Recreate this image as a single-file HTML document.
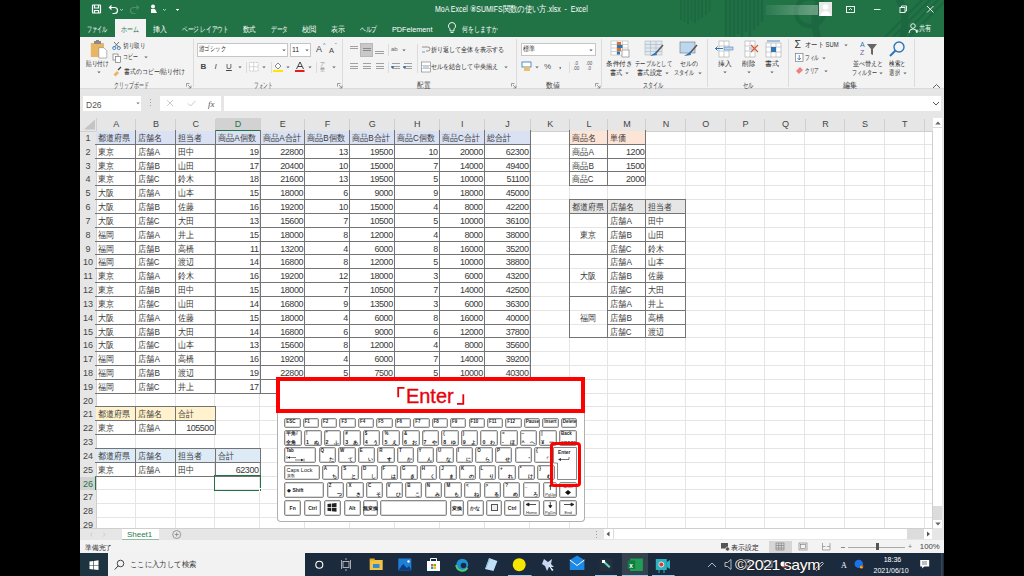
<!DOCTYPE html><html><head><meta charset="utf-8"><style>
*{box-sizing:border-box;margin:0;padding:0}
html,body{width:1024px;height:576px;overflow:hidden;background:#000}
body{position:relative;font-family:"Liberation Sans",sans-serif;color:#333}
.a{position:absolute}
.t{position:absolute;white-space:nowrap;line-height:1}
.cell{position:absolute;white-space:nowrap;overflow:hidden;font-size:9px;line-height:13px;color:#444;padding:0 2px}
.num{text-align:right;letter-spacing:-0.45px;padding-right:2px}
.ch{position:absolute;font-size:9px;color:#444;text-align:center;line-height:13px}
.rh{position:absolute;font-size:9px;color:#444;text-align:center;line-height:13px}
.tab{position:absolute;top:21px;font-size:8px;color:#fff;line-height:12px;white-space:nowrap}
.rl{position:absolute;font-size:7px;color:#2b2b2b;white-space:nowrap;line-height:1}
.gl{position:absolute;font-size:7px;color:#3c3c3c;white-space:nowrap;line-height:1}
.key{position:absolute;background:#fff;border:1px solid #8a8a8a;border-radius:2px;box-shadow:inset 0 0 0 1px #d8d8d8}
.kt{position:absolute;font-size:5.3px;color:#222;line-height:1;white-space:nowrap;font-weight:bold}
</style></head><body>
<div class="a" style="left:80px;top:0;width:864px;height:576px;background:#f3f3f3"></div>
<div class="a" style="left:80px;top:0;width:864px;height:37px;background:#217346;overflow:hidden">
<svg width="864" height="37" style="position:absolute;left:0;top:0"><g stroke="#1c6840" fill="none"><path d="M601 0 V20 M604.5 0 V22 M608 0 V24 M611.5 0 V21 M615 0 V23 M618.5 0 V20 M622 0 V18 M626 0 V15 M629.5 0 V12" stroke-width="1.6"/><path d="M646 0 V37 M650 0 V37 M654 0 V37 M658 0 V34 M662 0 V37 M666 0 V32 M670 0 V37 M674 0 V30 M678 0 V26 M682 0 V22" stroke-width="2.2"/><circle cx="730" cy="12" r="14" stroke-width="4.5"/><circle cx="780" cy="22" r="45" stroke-width="7"/><path d="M805 37 L850 -8 M813 37 L858 -8 M821 37 L866 -8 M829 37 L874 -8" stroke-width="2"/></g></svg>
</div>
<svg class="a" style="left:80px;top:0" width="100" height="19"><g fill="none" stroke="#fff" stroke-width="1.2"><rect x="12.5" y="5" width="8" height="8" rx="0.5"/><path d="M14.5 5 v3 h4 v-3 M14.5 13 v-2.5 h4 v2.5"/><path d="M30 7.5 h4.5 a3 3 0 0 1 0 6 h-2"/><path d="M31.5 5.5 l-2 2 l2 2"/></g><path d="M40 9 l1.5 1.5 l1.5 -1.5" fill="none" stroke="#cfe3d6" stroke-width="0.8"/><g fill="none" stroke="#4f8f69" stroke-width="1.2"><path d="M58 7.5 h-4.5 a3 3 0 0 0 0 6 h2"/><path d="M56.5 5.5 l2 2 l-2 2"/></g><circle cx="73" cy="6.5" r="2" fill="#fff"/><path d="M71 9 h4 l2 4 h-6z" fill="#fff"/><path d="M83 9 l1.5 1.5 l1.5 -1.5" fill="none" stroke="#cfe3d6" stroke-width="0.8"/><path d="M96 9 l1.5 1.5 l1.5 -1.5" fill="#fff" stroke="#fff" stroke-width="0.8"/></svg>
<div class="t" style="left:435px;top:5.49px;font-size:8.5px;color:#fff;--w:153px">MoA Excel ⑧SUMIFS関数の使い方.xlsx&nbsp; -&nbsp; Excel</div>
<div class="a" style="left:766px;top:5px;width:52px;height:10px;background:linear-gradient(90deg,rgba(255,255,255,0.05),rgba(255,255,255,0.35))"></div>
<div class="a" style="left:819px;top:2px;width:13px;height:14px;background:#e8e8e8"></div>
<svg class="a" style="left:819px;top:2px" width="13" height="14"><circle cx="6.5" cy="5" r="2.8" fill="#fff"/><path d="M1.5 14 a5 5 0 0 1 10 0z" fill="#fff"/></svg>
<svg class="a" style="left:840px;top:0" width="104" height="37"><g fill="none" stroke="#fff" stroke-width="0.9"><rect x="6.5" y="6.5" width="8" height="6"/><path d="M9 10 l1.5 -1.5 l1.5 1.5"/><path d="M34 9.5 h6.5"/><rect x="60" y="7.5" width="5" height="5"/><path d="M61.5 7.5 v-1.5 h5 v5 h-1.5"/><path d="M87 6 l6.5 6.5 M93.5 6 l-6.5 6.5"/><circle cx="73" cy="26" r="2.3"/><path d="M69 33 a4 4 0 0 1 8 0 M75.5 31 h3 M77 29.5 v3"/></g></svg>
<div class="t" style="left:918.8px;top:25.02px;font-size:8px;color:#fff;--w:12.3px">共有</div>
<div class="a" style="left:115px;top:19px;width:31px;height:18px;background:#f3f3f3"></div>
<div class="tab" style="left:86.5px;color:#fff;top:24.12px;--w:20.4px">ファイル</div>
<div class="tab" style="left:121px;color:#217346;top:24.12px;--w:18px">ホーム</div>
<div class="tab" style="left:153px;color:#fff;top:24.12px;--w:14px">挿入</div>
<div class="tab" style="left:182px;color:#fff;top:24.12px;--w:46.4px">ページ レイアウト</div>
<div class="tab" style="left:243.4px;color:#fff;top:24.12px;--w:12.9px">数式</div>
<div class="tab" style="left:271.4px;color:#fff;top:24.12px;--w:17.2px">データ</div>
<div class="tab" style="left:301.8px;color:#fff;top:24.12px;--w:14.4px">校閲</div>
<div class="tab" style="left:330.9px;color:#fff;top:24.12px;--w:13.9px">表示</div>
<div class="tab" style="left:359.9px;color:#fff;top:24.12px;--w:17.1px">ヘルプ</div>
<div class="tab" style="left:391.5px;color:#fff;top:23.66px;--w:40px">PDFelement</div>
<div class="tab" style="left:462px;color:#fff;top:24.12px;--w:35.5px">何をしますか</div>
<svg class="a" style="left:446px;top:21px" width="12" height="14"><path d="M6 1.5 a3.5 3.5 0 0 0 -2 6.4 v2 h4 v-2 a3.5 3.5 0 0 0 -2 -6.4z M4.5 11.5 h3" fill="none" stroke="#fff" stroke-width="0.9"/></svg>
<div class="a" style="left:80px;top:37px;width:864px;height:52px;background:#f3f3f3;border-bottom:1px solid #dadada"></div>
<div class="a" style="left:192.5px;top:39px;width:1px;height:48px;background:#dcdcdc"></div>
<div class="a" style="left:342.2px;top:39px;width:1px;height:48px;background:#dcdcdc"></div>
<div class="a" style="left:515.7px;top:39px;width:1px;height:48px;background:#dcdcdc"></div>
<div class="a" style="left:601px;top:39px;width:1px;height:48px;background:#dcdcdc"></div>
<div class="a" style="left:707.4px;top:39px;width:1px;height:48px;background:#dcdcdc"></div>
<div class="a" style="left:788.2px;top:39px;width:1px;height:48px;background:#dcdcdc"></div>
<div class="a" style="left:913.6px;top:39px;width:1px;height:48px;background:#dcdcdc"></div>
<div class="gl" style="left:114px;top:81.85px;font-size:7.5px;--w:34.6px">クリップボード</div>
<div class="gl" style="left:253.6px;top:81.95px;font-size:7.5px;--w:18.3px">フォント</div>
<div class="gl" style="left:417.3px;top:81.75px;font-size:7.5px;--w:13.2px">配置</div>
<div class="gl" style="left:546.2px;top:81.75px;font-size:7.5px;--w:13.8px">数値</div>
<div class="gl" style="left:643px;top:81.75px;font-size:7.5px;--w:20.4px">スタイル</div>
<div class="gl" style="left:742.5px;top:81.75px;font-size:7.5px;--w:10.5px">セル</div>
<div class="gl" style="left:843.3px;top:81.75px;font-size:7.5px;--w:14px">編集</div>
<svg class="a" style="left:186px;top:83px" width="6" height="6"><path d="M0.5 0.5 h3 M0.5 0.5 v3 M2 2 l3 3 M5 2.5 v2.5 h-2.5" fill="none" stroke="#777" stroke-width="0.7"/></svg>
<svg class="a" style="left:337px;top:83px" width="6" height="6"><path d="M0.5 0.5 h3 M0.5 0.5 v3 M2 2 l3 3 M5 2.5 v2.5 h-2.5" fill="none" stroke="#777" stroke-width="0.7"/></svg>
<svg class="a" style="left:510.5px;top:83px" width="6" height="6"><path d="M0.5 0.5 h3 M0.5 0.5 v3 M2 2 l3 3 M5 2.5 v2.5 h-2.5" fill="none" stroke="#777" stroke-width="0.7"/></svg>
<svg class="a" style="left:595px;top:83px" width="6" height="6"><path d="M0.5 0.5 h3 M0.5 0.5 v3 M2 2 l3 3 M5 2.5 v2.5 h-2.5" fill="none" stroke="#777" stroke-width="0.7"/></svg>
<svg class="a" style="left:932px;top:83px" width="9" height="6"><path d="M1 5 l3.5 -3.5 l3.5 3.5" fill="none" stroke="#555" stroke-width="0.9"/></svg>
<svg class="a" style="left:86px;top:40px" width="24" height="20"><rect x="4.8" y="3" width="13.2" height="14.1" fill="#e8b563" rx="0.5"/><rect x="8" y="1" width="7" height="3" fill="#8a8a8a"/><rect x="10" y="0" width="3" height="2" fill="#8a8a8a"/><path d="M12.8 7.7 h5 l3 3 v7.3 h-8z" fill="#fff" stroke="#888" stroke-width="0.6"/></svg>
<div class="rl" style="left:85.9px;top:60.81px;font-size:6.5px;--w:22.8px">貼り付け</div>
<svg class="a" style="left:96.5px;top:71.0px" width="4" height="3"><path d="M0.3 0.5 L2 2.3 L3.7 0.5z" fill="#666"/></svg>
<svg class="a" style="left:112px;top:41px" width="10" height="36"><path d="M2 1 L7 6.5 M7 1 L2 6.5" stroke="#555" stroke-width="0.8"/><circle cx="2.2" cy="7" r="1.6" fill="none" stroke="#2e75b6" stroke-width="0.8"/><circle cx="6.8" cy="7" r="1.6" fill="none" stroke="#2e75b6" stroke-width="0.8"/><rect x="1" y="13" width="5" height="6" fill="#fff" stroke="#777" stroke-width="0.7"/><rect x="3.5" y="15.5" width="5" height="6" fill="#fff" stroke="#777" stroke-width="0.7"/><path d="M1.5 33.5 L5 30 L7 32 L3.5 35.5z" fill="#e8b563"/><path d="M6 29 L9 26" stroke="#444" stroke-width="1.2"/></svg>
<div class="rl" style="left:123.4px;top:42.61px;font-size:6.5px;--w:22.2px">切り取り</div>
<div class="rl" style="left:123.4px;top:53.61px;font-size:6.5px;--w:14.6px">コピー</div>
<svg class="a" style="left:144.2px;top:56.0px" width="4" height="3"><path d="M0.3 0.5 L2 2.3 L3.7 0.5z" fill="#666"/></svg>
<div class="rl" style="left:123.6px;top:69.01px;font-size:6.5px;--w:60.7px">書式のコピー/貼り付け</div>
<div class="a" style="left:197.4px;top:42.7px;width:91px;height:14px;background:#fff;border:1px solid #c6c6c6"></div>
<div class="rl" style="left:198.5px;top:46.41px;font-size:6.5px;--w:27px">游ゴシック</div>
<svg class="a" style="left:282px;top:48.5px" width="4" height="3"><path d="M0.3 0.5 L2 2.3 L3.7 0.5z" fill="#666"/></svg>
<div class="a" style="left:290px;top:42.7px;width:21.3px;height:14px;background:#fff;border:1px solid #c6c6c6"></div>
<div class="rl" style="left:292px;top:46px;font-size:7px">11</div>
<svg class="a" style="left:305px;top:48.5px" width="4" height="3"><path d="M0.3 0.5 L2 2.3 L3.7 0.5z" fill="#666"/></svg>
<div class="rl" style="left:316px;top:45px;font-size:9px;color:#444">A</div><div class="rl" style="left:323px;top:43px;font-size:5px;color:#2e75b6">^</div>
<div class="rl" style="left:329px;top:46.5px;font-size:7.5px;color:#444">A</div><div class="rl" style="left:335px;top:43px;font-size:5px;color:#2e75b6">ˇ</div>
<div class="rl" style="left:200.5px;top:62.5px;font-size:8px;font-weight:bold;color:#444">B</div>
<div class="rl" style="left:214.5px;top:62.5px;font-size:8px;font-style:italic;color:#444">I</div>
<div class="rl" style="left:226px;top:62.5px;font-size:8px;color:#444;text-decoration:underline">U</div>
<svg class="a" style="left:238px;top:65.5px" width="4" height="3"><path d="M0.3 0.5 L2 2.3 L3.7 0.5z" fill="#666"/></svg>
<div class="a" style="left:246.2px;top:62px;width:1px;height:11px;background:#dcdcdc"></div>
<svg class="a" style="left:249px;top:62px" width="10" height="10"><rect x="0.5" y="0.5" width="8.5" height="8.5" fill="#fff" stroke="#aaa" stroke-width="0.6" stroke-dasharray="1 0.6"/><path d="M4.75 0.5 v8.5 M0.5 4.75 h8.5" stroke="#bbb" stroke-width="0.6"/></svg>
<svg class="a" style="left:262.3px;top:65.5px" width="4" height="3"><path d="M0.3 0.5 L2 2.3 L3.7 0.5z" fill="#666"/></svg>
<div class="a" style="left:270.5px;top:62px;width:1px;height:11px;background:#dcdcdc"></div>
<svg class="a" style="left:273px;top:61px" width="10" height="11"><path d="M2 5 L5 2 L8 5 L5 8z" fill="#fff" stroke="#555" stroke-width="0.7"/><rect x="0" y="9" width="10" height="2" fill="#ffe600"/></svg>
<svg class="a" style="left:286px;top:65.5px" width="4" height="3"><path d="M0.3 0.5 L2 2.3 L3.7 0.5z" fill="#666"/></svg>
<svg class="a" style="left:295px;top:61px" width="10" height="11"><path d="M1.5 8 L5 1 L8.5 8 M3 5.5 h4" fill="none" stroke="#444" stroke-width="1"/><rect x="0" y="9" width="9.5" height="2" fill="#e81c1c"/></svg>
<svg class="a" style="left:307.6px;top:65.5px" width="4" height="3"><path d="M0.3 0.5 L2 2.3 L3.7 0.5z" fill="#666"/></svg>
<div class="a" style="left:315.5px;top:62px;width:1px;height:11px;background:#dcdcdc"></div>
<div class="rl" style="left:320px;top:62px;font-size:5px;color:#888">ア<br>亜</div>
<svg class="a" style="left:331.7px;top:65.5px" width="4" height="3"><path d="M0.3 0.5 L2 2.3 L3.7 0.5z" fill="#666"/></svg>
<div class="a" style="left:359.9px;top:43px;width:13px;height:13.7px;background:#c8c8c8;border:1px solid #b8b8b8"></div>
<div class="a" style="left:350px;top:46px;width:8px;height:1px;background:#a0a0a0"></div><div class="a" style="left:350px;top:48px;width:8px;height:1px;background:#a0a0a0"></div>
<div class="a" style="left:362.5px;top:48px;width:8px;height:1px;background:#8a8a8a"></div><div class="a" style="left:362.5px;top:50px;width:8px;height:1px;background:#8a8a8a"></div>
<div class="a" style="left:375px;top:51px;width:9px;height:1px;background:#a0a0a0"></div><div class="a" style="left:375px;top:53px;width:9px;height:1px;background:#a0a0a0"></div>
<div class="a" style="left:349.7px;top:63.0px;width:8px;height:1px;background:#a0a0a0"></div><div class="a" style="left:349.7px;top:65.5px;width:8px;height:1px;background:#a0a0a0"></div><div class="a" style="left:349.7px;top:68.0px;width:8px;height:1px;background:#a0a0a0"></div>
<div class="a" style="left:362.5px;top:63.0px;width:8px;height:1px;background:#a0a0a0"></div><div class="a" style="left:362.5px;top:65.5px;width:8px;height:1px;background:#a0a0a0"></div><div class="a" style="left:362.5px;top:68.0px;width:8px;height:1px;background:#a0a0a0"></div>
<div class="a" style="left:375.5px;top:63.0px;width:8px;height:1px;background:#a0a0a0"></div><div class="a" style="left:375.5px;top:65.5px;width:8px;height:1px;background:#a0a0a0"></div><div class="a" style="left:375.5px;top:68.0px;width:8px;height:1px;background:#a0a0a0"></div>
<div class="a" style="left:392px;top:63.0px;width:8px;height:1px;background:#a0a0a0"></div><div class="a" style="left:392px;top:65.5px;width:8px;height:1px;background:#a0a0a0"></div><div class="a" style="left:392px;top:68.0px;width:8px;height:1px;background:#a0a0a0"></div>
<div class="a" style="left:404px;top:63.0px;width:8px;height:1px;background:#a0a0a0"></div><div class="a" style="left:404px;top:65.5px;width:8px;height:1px;background:#a0a0a0"></div><div class="a" style="left:404px;top:68.0px;width:8px;height:1px;background:#a0a0a0"></div>
<div class="a" style="left:391px;top:65.5px;width:2.5px;height:2.5px;background:#2e75b6;border-radius:50%"></div>
<div class="a" style="left:403px;top:65.5px;width:2.5px;height:2.5px;background:#2e75b6;border-radius:50%"></div>
<div class="a" style="left:387.5px;top:44px;width:1px;height:12px;background:#dcdcdc"></div>
<div class="a" style="left:387.5px;top:62px;width:1px;height:11px;background:#dcdcdc"></div>
<div class="rl" style="left:391px;top:46px;font-size:6px;color:#666">ab</div>
<svg class="a" style="left:402px;top:48.5px" width="4" height="3"><path d="M0.3 0.5 L2 2.3 L3.7 0.5z" fill="#666"/></svg>
<div class="a" style="left:416.5px;top:44px;width:1px;height:29px;background:#dcdcdc"></div>
<svg class="a" style="left:421px;top:45px" width="10" height="28"><path d="M1 2 h6 a2 2 0 0 1 0 4 h-2" fill="none" stroke="#666" stroke-width="0.7"/><path d="M1 7 h3" stroke="#2e75b6" stroke-width="0.7"/><rect x="0.5" y="17" width="9" height="10" fill="#fff" stroke="#777" stroke-width="0.6"/><path d="M0.5 20.5 h9 M0.5 23.5 h9" stroke="#999" stroke-width="0.5"/><path d="M2 22 h6" stroke="#2e75b6" stroke-width="0.6"/></svg>
<div class="rl" style="left:431.4px;top:46.50px;font-size:6.6px;--w:72.9px">折り返して全体を表示する</div>
<div class="rl" style="left:431.4px;top:63.70px;font-size:6.6px;--w:66.8px">セルを結合して中央揃え</div>
<svg class="a" style="left:504px;top:65.5px" width="4" height="3"><path d="M0.3 0.5 L2 2.3 L3.7 0.5z" fill="#666"/></svg>
<div class="a" style="left:520.5px;top:42.8px;width:75px;height:13.7px;background:#fff;border:1px solid #c6c6c6"></div>
<div class="rl" style="left:522.5px;top:46.41px;font-size:6.5px;--w:12px">標準</div>
<svg class="a" style="left:589px;top:48.5px" width="4" height="3"><path d="M0.3 0.5 L2 2.3 L3.7 0.5z" fill="#666"/></svg>
<svg class="a" style="left:521px;top:61px" width="12" height="11"><rect x="1" y="1" width="9" height="5" fill="#fff" stroke="#2e75b6" stroke-width="0.8"/><rect x="3" y="6" width="6" height="4" fill="#e8c070"/></svg>
<svg class="a" style="left:535px;top:65.5px" width="4" height="3"><path d="M0.3 0.5 L2 2.3 L3.7 0.5z" fill="#666"/></svg>
<div class="rl" style="left:544px;top:62.5px;font-size:8px;color:#555">%</div>
<div class="rl" style="left:559px;top:61.5px;font-size:8px;color:#444;font-weight:bold">,</div>
<div class="a" style="left:568.5px;top:62px;width:1px;height:11px;background:#dcdcdc"></div>
<div class="rl" style="left:573px;top:62px;font-size:4.5px;color:#555;line-height:4.5px">&nbsp;.0<br>.00</div>
<div class="rl" style="left:586px;top:62px;font-size:4.5px;color:#555;line-height:4.5px">.00<br>&nbsp;.0</div>
<svg class="a" style="left:610px;top:40px" width="90" height="18"><g stroke="#aaa" stroke-width="0.5" fill="#fff"><rect x="1" y="1" width="17" height="14"/><path d="M1 4.5 h17 M1 8 h17 M1 11.5 h17 M7 1 v14 M12.5 1 v14"/></g><rect x="7" y="2" width="4" height="3" fill="#e07030"/><rect x="7" y="5" width="5.5" height="3" fill="#2e75b6"/><rect x="7" y="8" width="4" height="3" fill="#e07030"/><rect x="7" y="11.5" width="3" height="3" fill="#2e75b6"/><rect x="12" y="10" width="7" height="7" fill="#fff" stroke="#777" stroke-width="0.6"/><g stroke="#aaa" stroke-width="0.5" fill="#dde8f5"><rect x="35" y="1" width="17" height="14"/><path d="M35 4.5 h17 M35 8 h17 M35 11.5 h17 M40.5 1 v14 M46 1 v14"/></g><path d="M46 13 L53 5" stroke="#555" stroke-width="1.5"/><path d="M40 16 L46 12 L47 15z" fill="#2e75b6"/><rect x="70" y="2" width="15" height="11" fill="#bdd7ee" stroke="#777" stroke-width="0.6"/><path d="M80 13 L87 5" stroke="#555" stroke-width="1.5"/><path d="M74 16 L80 12 L81 15z" fill="#2e75b6"/></svg>
<div class="rl" style="left:605.8px;top:61.00px;font-size:6.6px;--w:26.4px">条件付き</div>
<div class="rl" style="left:609.5px;top:69.80px;font-size:6.6px;--w:12.5px">書式</div>
<svg class="a" style="left:625px;top:71.5px" width="4" height="3"><path d="M0.3 0.5 L2 2.3 L3.7 0.5z" fill="#666"/></svg>
<div class="rl" style="left:634.5px;top:61.00px;font-size:6.6px;--w:36.75px">テーブルとして</div>
<div class="rl" style="left:637px;top:69.80px;font-size:6.6px;--w:25px">書式設定</div>
<svg class="a" style="left:665px;top:71.5px" width="4" height="3"><path d="M0.3 0.5 L2 2.3 L3.7 0.5z" fill="#666"/></svg>
<div class="rl" style="left:680px;top:61.00px;font-size:6.6px;--w:18px">セルの</div>
<div class="rl" style="left:674.2px;top:69.80px;font-size:6.6px;--w:20.5px">スタイル</div>
<svg class="a" style="left:698px;top:71.5px" width="4" height="3"><path d="M0.3 0.5 L2 2.3 L3.7 0.5z" fill="#666"/></svg>
<svg class="a" style="left:714px;top:40px" width="70" height="19"><g stroke="#999" stroke-width="0.5" fill="#fff"><rect x="5" y="1" width="10" height="16"/><path d="M5 6 h10 M5 11 h10 M10 1 v5 M10 11 v6"/><rect x="31" y="1" width="10" height="16"/><path d="M31 6 h10 M31 11 h10 M36 1 v5 M36 11 v6"/><rect x="52" y="3" width="15" height="14"/><path d="M52 7 h15 M52 12 h15 M57 3 v14 M62 3 v14"/></g><path d="M1 8.5 h8" stroke="#2e75b6" stroke-width="1"/><path d="M3.5 6.5 L1.5 8.5 L3.5 10.5" fill="none" stroke="#2e75b6" stroke-width="1"/><rect x="10" y="7" width="9" height="3" fill="#bdd7ee" stroke="#2e75b6" stroke-width="0.5"/><rect x="35" y="7" width="6" height="3" fill="#bdd7ee"/><path d="M37 5 L44 12 M44 5 L37 12" stroke="#e05a2b" stroke-width="1.1"/><rect x="57" y="7" width="5" height="5" fill="#2e75b6"/><path d="M53 1 h13" stroke="#2e75b6" stroke-width="0.8"/></svg>
<div class="rl" style="left:717.9px;top:60.90px;font-size:6.6px;--w:13.3px">挿入</div>
<svg class="a" style="left:722.5px;top:71.0px" width="4" height="3"><path d="M0.3 0.5 L2 2.3 L3.7 0.5z" fill="#666"/></svg>
<div class="rl" style="left:742px;top:60.90px;font-size:6.6px;--w:13px">削除</div>
<svg class="a" style="left:746.5px;top:71.0px" width="4" height="3"><path d="M0.3 0.5 L2 2.3 L3.7 0.5z" fill="#666"/></svg>
<div class="rl" style="left:765px;top:60.90px;font-size:6.6px;--w:14px">書式</div>
<svg class="a" style="left:770px;top:71.0px" width="4" height="3"><path d="M0.3 0.5 L2 2.3 L3.7 0.5z" fill="#666"/></svg>
<div class="rl" style="left:794.5px;top:39.3px;font-size:10.5px;color:#333">Σ</div>
<div class="rl" style="left:805.3px;top:42.11px;font-size:6.5px;--w:33.3px">オート SUM</div>
<svg class="a" style="left:843.6px;top:43.5px" width="4" height="3"><path d="M0.3 0.5 L2 2.3 L3.7 0.5z" fill="#666"/></svg>
<svg class="a" style="left:795px;top:53px" width="9" height="22"><rect x="0.5" y="0.5" width="7.5" height="8" fill="#fff" stroke="#666" stroke-width="0.6"/><path d="M4.25 2 v5 M2.5 5 l1.75 2 l1.75 -2" fill="none" stroke="#2e75b6" stroke-width="0.8"/><path d="M1 18 L5 14 L8 17 L4 21z" fill="#f08080"/></svg>
<div class="rl" style="left:805.3px;top:54.71px;font-size:6.5px;--w:14px">フィル</div>
<svg class="a" style="left:822px;top:57.0px" width="4" height="3"><path d="M0.3 0.5 L2 2.3 L3.7 0.5z" fill="#666"/></svg>
<div class="rl" style="left:805.3px;top:67.51px;font-size:6.5px;--w:14px">クリア</div>
<svg class="a" style="left:824px;top:69.5px" width="4" height="3"><path d="M0.3 0.5 L2 2.3 L3.7 0.5z" fill="#666"/></svg>
<svg class="a" style="left:859px;top:40px" width="48" height="18"><text x="1" y="7" font-size="7" fill="#2e75b6" font-family="Liberation Sans">A</text><text x="1" y="15" font-size="7" fill="#7a5aa6" font-family="Liberation Sans">Z</text><path d="M8 4 h10 l-4 5 v6 l-2 -1 v-5z" fill="#666"/><circle cx="40" cy="7" r="5" fill="none" stroke="#2e75b6" stroke-width="1.4"/><path d="M36.5 10.5 L31 16" stroke="#2e75b6" stroke-width="2"/></svg>
<div class="rl" style="left:853px;top:60.60px;font-size:6.6px;--w:30px">並べ替えと</div>
<div class="rl" style="left:852px;top:69.60px;font-size:6.6px;--w:25px">フィルター</div>
<svg class="a" style="left:879px;top:71.5px" width="4" height="3"><path d="M0.3 0.5 L2 2.3 L3.7 0.5z" fill="#666"/></svg>
<div class="rl" style="left:889px;top:60.60px;font-size:6.6px;--w:16.5px">検索と</div>
<div class="rl" style="left:889px;top:69.60px;font-size:6.6px;--w:11px">選択</div>
<svg class="a" style="left:903px;top:71.5px" width="4" height="3"><path d="M0.3 0.5 L2 2.3 L3.7 0.5z" fill="#666"/></svg>
<div class="a" style="left:80px;top:89px;width:864px;height:29px;background:#e6e6e6"></div>
<div class="a" style="left:83.1px;top:96.2px;width:58px;height:14.8px;background:#fff"></div>
<div class="t" style="left:86px;top:100.5px;font-size:8.5px;color:#555">D26</div>
<svg class="a" style="left:135.5px;top:102.0px" width="4" height="3"><path d="M0.3 0.5 L2 2.3 L3.7 0.5z" fill="#777"/></svg>
<svg class="a" style="left:149px;top:98px" width="3" height="10"><circle cx="1.5" cy="1.5" r="0.6" fill="#999"/><circle cx="1.5" cy="4.5" r="0.6" fill="#999"/><circle cx="1.5" cy="7.5" r="0.6" fill="#999"/></svg>
<div class="a" style="left:160px;top:96.2px;width:61.4px;height:14.8px;background:#fff"></div>
<svg class="a" style="left:160px;top:96px" width="62" height="15"><path d="M7 4 l6 6 M13 4 l-6 6" stroke="#c0c0c0" stroke-width="0.8"/><path d="M28 7.5 l2.5 2.5 l5 -5" fill="none" stroke="#c0c0c0" stroke-width="0.9"/><text x="48" y="11" font-size="9" font-style="italic" font-family="Liberation Serif" fill="#555">fx</text></svg>
<div class="a" style="left:223.8px;top:96.2px;width:717px;height:14.8px;background:#fff"></div>
<svg class="a" style="left:932px;top:101px" width="8" height="5"><path d="M1 1 l3 3 l3 -3" fill="none" stroke="#555" stroke-width="1"/></svg>
<div class="a" style="left:80px;top:118px;width:852.2px;height:13px;background:#e6e6e6"></div>
<div class="a" style="left:80px;top:131px;width:16.4px;height:397.5px;background:#e6e6e6"></div>
<div class="a" style="left:96.4px;top:131px;width:835.8000000000001px;height:397.5px;background:#fff;overflow:hidden">
<div class="a" style="left:38.70px;top:0;width:1px;height:400px;background:#e5e5e5"></div><div class="a" style="left:78.40px;top:0;width:1px;height:400px;background:#e5e5e5"></div><div class="a" style="left:118.10px;top:0;width:1px;height:400px;background:#e5e5e5"></div><div class="a" style="left:163.10px;top:0;width:1px;height:400px;background:#e5e5e5"></div><div class="a" style="left:207.60px;top:0;width:1px;height:400px;background:#e5e5e5"></div><div class="a" style="left:252.40px;top:0;width:1px;height:400px;background:#e5e5e5"></div><div class="a" style="left:297.30px;top:0;width:1px;height:400px;background:#e5e5e5"></div><div class="a" style="left:342.30px;top:0;width:1px;height:400px;background:#e5e5e5"></div><div class="a" style="left:387.30px;top:0;width:1px;height:400px;background:#e5e5e5"></div><div class="a" style="left:433.10px;top:0;width:1px;height:400px;background:#e5e5e5"></div><div class="a" style="left:472.60px;top:0;width:1px;height:400px;background:#e5e5e5"></div><div class="a" style="left:510.40px;top:0;width:1px;height:400px;background:#e5e5e5"></div><div class="a" style="left:548.90px;top:0;width:1px;height:400px;background:#e5e5e5"></div><div class="a" style="left:588.40px;top:0;width:1px;height:400px;background:#e5e5e5"></div><div class="a" style="left:628.20px;top:0;width:1px;height:400px;background:#e5e5e5"></div><div class="a" style="left:668.00px;top:0;width:1px;height:400px;background:#e5e5e5"></div><div class="a" style="left:708.10px;top:0;width:1px;height:400px;background:#e5e5e5"></div><div class="a" style="left:747.90px;top:0;width:1px;height:400px;background:#e5e5e5"></div><div class="a" style="left:787.40px;top:0;width:1px;height:400px;background:#e5e5e5"></div><div class="a" style="left:827.20px;top:0;width:1px;height:400px;background:#e5e5e5"></div><div class="a" style="left:866.60px;top:0;width:1px;height:400px;background:#e5e5e5"></div><div class="a" style="left:0;top:12.85px;width:900px;height:1px;background:#e5e5e5"></div><div class="a" style="left:0;top:26.67px;width:900px;height:1px;background:#e5e5e5"></div><div class="a" style="left:0;top:40.49px;width:900px;height:1px;background:#e5e5e5"></div><div class="a" style="left:0;top:54.31px;width:900px;height:1px;background:#e5e5e5"></div><div class="a" style="left:0;top:68.13px;width:900px;height:1px;background:#e5e5e5"></div><div class="a" style="left:0;top:81.95px;width:900px;height:1px;background:#e5e5e5"></div><div class="a" style="left:0;top:95.77px;width:900px;height:1px;background:#e5e5e5"></div><div class="a" style="left:0;top:109.59px;width:900px;height:1px;background:#e5e5e5"></div><div class="a" style="left:0;top:123.41px;width:900px;height:1px;background:#e5e5e5"></div><div class="a" style="left:0;top:137.23px;width:900px;height:1px;background:#e5e5e5"></div><div class="a" style="left:0;top:151.05px;width:900px;height:1px;background:#e5e5e5"></div><div class="a" style="left:0;top:164.87px;width:900px;height:1px;background:#e5e5e5"></div><div class="a" style="left:0;top:178.69px;width:900px;height:1px;background:#e5e5e5"></div><div class="a" style="left:0;top:192.51px;width:900px;height:1px;background:#e5e5e5"></div><div class="a" style="left:0;top:206.33px;width:900px;height:1px;background:#e5e5e5"></div><div class="a" style="left:0;top:220.15px;width:900px;height:1px;background:#e5e5e5"></div><div class="a" style="left:0;top:233.97px;width:900px;height:1px;background:#e5e5e5"></div><div class="a" style="left:0;top:247.79px;width:900px;height:1px;background:#e5e5e5"></div><div class="a" style="left:0;top:261.61px;width:900px;height:1px;background:#e5e5e5"></div><div class="a" style="left:0;top:275.43px;width:900px;height:1px;background:#e5e5e5"></div><div class="a" style="left:0;top:289.25px;width:900px;height:1px;background:#e5e5e5"></div><div class="a" style="left:0;top:303.07px;width:900px;height:1px;background:#e5e5e5"></div><div class="a" style="left:0;top:316.89px;width:900px;height:1px;background:#e5e5e5"></div><div class="a" style="left:0;top:330.71px;width:900px;height:1px;background:#e5e5e5"></div><div class="a" style="left:0;top:344.53px;width:900px;height:1px;background:#e5e5e5"></div><div class="a" style="left:0;top:358.35px;width:900px;height:1px;background:#e5e5e5"></div><div class="a" style="left:0;top:372.17px;width:900px;height:1px;background:#e5e5e5"></div><div class="a" style="left:0;top:385.99px;width:900px;height:1px;background:#e5e5e5"></div><div class="a" style="left:0;top:399.81px;width:900px;height:1px;background:#e5e5e5"></div>
</div>
<svg class="a" style="left:80px;top:118px" width="17" height="13"><path d="M15 1.5 V11.5 H4z" fill="#c4c4c4"/></svg>
<div class="ch" style="left:96.40px;top:118px;width:39.70px;height:13px;background:transparent;color:#444">A</div>
<div class="a" style="left:135.10px;top:119px;width:1px;height:12px;background:#cfcfcf"></div>
<div class="ch" style="left:136.10px;top:118px;width:39.70px;height:13px;background:transparent;color:#444">B</div>
<div class="a" style="left:174.80px;top:119px;width:1px;height:12px;background:#cfcfcf"></div>
<div class="ch" style="left:175.80px;top:118px;width:39.70px;height:13px;background:transparent;color:#444">C</div>
<div class="a" style="left:214.50px;top:119px;width:1px;height:12px;background:#cfcfcf"></div>
<div class="ch" style="left:215.50px;top:118px;width:45.00px;height:13px;background:#d2d2d2;color:#217346">D</div>
<div class="a" style="left:259.50px;top:119px;width:1px;height:12px;background:#cfcfcf"></div>
<div class="ch" style="left:260.50px;top:118px;width:44.50px;height:13px;background:transparent;color:#444">E</div>
<div class="a" style="left:304.00px;top:119px;width:1px;height:12px;background:#cfcfcf"></div>
<div class="ch" style="left:305.00px;top:118px;width:44.80px;height:13px;background:transparent;color:#444">F</div>
<div class="a" style="left:348.80px;top:119px;width:1px;height:12px;background:#cfcfcf"></div>
<div class="ch" style="left:349.80px;top:118px;width:44.90px;height:13px;background:transparent;color:#444">G</div>
<div class="a" style="left:393.70px;top:119px;width:1px;height:12px;background:#cfcfcf"></div>
<div class="ch" style="left:394.70px;top:118px;width:45.00px;height:13px;background:transparent;color:#444">H</div>
<div class="a" style="left:438.70px;top:119px;width:1px;height:12px;background:#cfcfcf"></div>
<div class="ch" style="left:439.70px;top:118px;width:45.00px;height:13px;background:transparent;color:#444">I</div>
<div class="a" style="left:483.70px;top:119px;width:1px;height:12px;background:#cfcfcf"></div>
<div class="ch" style="left:484.70px;top:118px;width:45.80px;height:13px;background:transparent;color:#444">J</div>
<div class="a" style="left:529.50px;top:119px;width:1px;height:12px;background:#cfcfcf"></div>
<div class="ch" style="left:530.50px;top:118px;width:39.50px;height:13px;background:transparent;color:#444">K</div>
<div class="a" style="left:569.00px;top:119px;width:1px;height:12px;background:#cfcfcf"></div>
<div class="ch" style="left:570.00px;top:118px;width:37.80px;height:13px;background:transparent;color:#444">L</div>
<div class="a" style="left:606.80px;top:119px;width:1px;height:12px;background:#cfcfcf"></div>
<div class="ch" style="left:607.80px;top:118px;width:38.50px;height:13px;background:transparent;color:#444">M</div>
<div class="a" style="left:645.30px;top:119px;width:1px;height:12px;background:#cfcfcf"></div>
<div class="ch" style="left:646.30px;top:118px;width:39.50px;height:13px;background:transparent;color:#444">N</div>
<div class="a" style="left:684.80px;top:119px;width:1px;height:12px;background:#cfcfcf"></div>
<div class="ch" style="left:685.80px;top:118px;width:39.80px;height:13px;background:transparent;color:#444">O</div>
<div class="a" style="left:724.60px;top:119px;width:1px;height:12px;background:#cfcfcf"></div>
<div class="ch" style="left:725.60px;top:118px;width:39.80px;height:13px;background:transparent;color:#444">P</div>
<div class="a" style="left:764.40px;top:119px;width:1px;height:12px;background:#cfcfcf"></div>
<div class="ch" style="left:765.40px;top:118px;width:40.10px;height:13px;background:transparent;color:#444">Q</div>
<div class="a" style="left:804.50px;top:119px;width:1px;height:12px;background:#cfcfcf"></div>
<div class="ch" style="left:805.50px;top:118px;width:39.80px;height:13px;background:transparent;color:#444">R</div>
<div class="a" style="left:844.30px;top:119px;width:1px;height:12px;background:#cfcfcf"></div>
<div class="ch" style="left:845.30px;top:118px;width:39.50px;height:13px;background:transparent;color:#444">S</div>
<div class="a" style="left:883.80px;top:119px;width:1px;height:12px;background:#cfcfcf"></div>
<div class="ch" style="left:884.80px;top:118px;width:39.80px;height:13px;background:transparent;color:#444">T</div>
<div class="a" style="left:923.60px;top:119px;width:1px;height:12px;background:#cfcfcf"></div>
<div class="ch" style="left:924.60px;top:118px;width:7.60px;height:13px;background:transparent;color:#444"></div>
<div class="a" style="left:932.20px;top:119px;width:1px;height:12px;background:#cfcfcf"></div>
<div class="a" style="left:215.50px;top:129.5px;width:45.00px;height:1.5px;background:#217346"></div>
<div class="a" style="left:80px;top:130.5px;width:852px;height:1px;background:#cfcfcf"></div>
<div class="a" style="left:95.9px;top:118px;width:1px;height:411px;background:#cfcfcf"></div>
<div class="rh" style="left:80px;top:131.03px;width:16px;height:13.82px;background:transparent;color:#444;line-height:14px">1</div>
<div class="rh" style="left:80px;top:144.85px;width:16px;height:13.82px;background:transparent;color:#444;line-height:14px">2</div>
<div class="rh" style="left:80px;top:158.67px;width:16px;height:13.82px;background:transparent;color:#444;line-height:14px">3</div>
<div class="rh" style="left:80px;top:172.49px;width:16px;height:13.82px;background:transparent;color:#444;line-height:14px">4</div>
<div class="rh" style="left:80px;top:186.31px;width:16px;height:13.82px;background:transparent;color:#444;line-height:14px">5</div>
<div class="rh" style="left:80px;top:200.13px;width:16px;height:13.82px;background:transparent;color:#444;line-height:14px">6</div>
<div class="rh" style="left:80px;top:213.95px;width:16px;height:13.82px;background:transparent;color:#444;line-height:14px">7</div>
<div class="rh" style="left:80px;top:227.77px;width:16px;height:13.82px;background:transparent;color:#444;line-height:14px">8</div>
<div class="rh" style="left:80px;top:241.59px;width:16px;height:13.82px;background:transparent;color:#444;line-height:14px">9</div>
<div class="rh" style="left:80px;top:255.41px;width:16px;height:13.82px;background:transparent;color:#444;line-height:14px">10</div>
<div class="rh" style="left:80px;top:269.23px;width:16px;height:13.82px;background:transparent;color:#444;line-height:14px">11</div>
<div class="rh" style="left:80px;top:283.05px;width:16px;height:13.82px;background:transparent;color:#444;line-height:14px">12</div>
<div class="rh" style="left:80px;top:296.87px;width:16px;height:13.82px;background:transparent;color:#444;line-height:14px">13</div>
<div class="rh" style="left:80px;top:310.69px;width:16px;height:13.82px;background:transparent;color:#444;line-height:14px">14</div>
<div class="rh" style="left:80px;top:324.51px;width:16px;height:13.82px;background:transparent;color:#444;line-height:14px">15</div>
<div class="rh" style="left:80px;top:338.33px;width:16px;height:13.82px;background:transparent;color:#444;line-height:14px">16</div>
<div class="rh" style="left:80px;top:352.15px;width:16px;height:13.82px;background:transparent;color:#444;line-height:14px">17</div>
<div class="rh" style="left:80px;top:365.97px;width:16px;height:13.82px;background:transparent;color:#444;line-height:14px">18</div>
<div class="rh" style="left:80px;top:379.79px;width:16px;height:13.82px;background:transparent;color:#444;line-height:14px">19</div>
<div class="rh" style="left:80px;top:393.61px;width:16px;height:13.82px;background:transparent;color:#444;line-height:14px">20</div>
<div class="rh" style="left:80px;top:407.43px;width:16px;height:13.82px;background:transparent;color:#444;line-height:14px">21</div>
<div class="rh" style="left:80px;top:421.25px;width:16px;height:13.82px;background:transparent;color:#444;line-height:14px">22</div>
<div class="rh" style="left:80px;top:435.07px;width:16px;height:13.82px;background:transparent;color:#444;line-height:14px">23</div>
<div class="rh" style="left:80px;top:448.89px;width:16px;height:13.82px;background:transparent;color:#444;line-height:14px">24</div>
<div class="rh" style="left:80px;top:462.71px;width:16px;height:13.82px;background:transparent;color:#444;line-height:14px">25</div>
<div class="rh" style="left:80px;top:476.53px;width:16px;height:13.82px;background:#d2d2d2;color:#217346;line-height:14px">26</div>
<div class="rh" style="left:80px;top:490.35px;width:16px;height:13.82px;background:transparent;color:#444;line-height:14px">27</div>
<div class="rh" style="left:80px;top:504.17px;width:16px;height:13.82px;background:transparent;color:#444;line-height:14px">28</div>
<div class="rh" style="left:80px;top:517.99px;width:16px;height:10.51px;background:transparent;color:#444;line-height:14px">29</div>
<div class="a" style="left:94.9px;top:476.53px;width:1.5px;height:13.76px;background:#217346"></div>
<div class="cell" style="left:96.40px;top:131.03px;width:39.70px;height:13.82px;color:#3a3a3a;background:#d9e1f2;line-height:15.62px;"><span style="display:inline-block;--w:32.0px">都道府県</span></div>
<div class="cell" style="left:136.10px;top:131.03px;width:39.70px;height:13.82px;color:#3a3a3a;background:#d9e1f2;line-height:15.62px;"><span style="display:inline-block;--w:24.0px">店舗名</span></div>
<div class="cell" style="left:175.80px;top:131.03px;width:39.70px;height:13.82px;color:#3a3a3a;background:#d9e1f2;line-height:15.62px;"><span style="display:inline-block;--w:24.0px">担当者</span></div>
<div class="cell" style="left:215.50px;top:131.03px;width:45.00px;height:13.82px;color:#3a3a3a;background:#d9e1f2;line-height:15.62px;"><span style="display:inline-block;--w:38.0px">商品A個数</span></div>
<div class="cell" style="left:260.50px;top:131.03px;width:44.50px;height:13.82px;color:#3a3a3a;background:#d9e1f2;line-height:15.62px;"><span style="display:inline-block;--w:38.0px">商品A合計</span></div>
<div class="cell" style="left:305.00px;top:131.03px;width:44.80px;height:13.82px;color:#3a3a3a;background:#d9e1f2;line-height:15.62px;"><span style="display:inline-block;--w:38.0px">商品B個数</span></div>
<div class="cell" style="left:349.80px;top:131.03px;width:44.90px;height:13.82px;color:#3a3a3a;background:#d9e1f2;line-height:15.62px;"><span style="display:inline-block;--w:38.0px">商品B合計</span></div>
<div class="cell" style="left:394.70px;top:131.03px;width:45.00px;height:13.82px;color:#3a3a3a;background:#d9e1f2;line-height:15.62px;"><span style="display:inline-block;--w:38.0px">商品C個数</span></div>
<div class="cell" style="left:439.70px;top:131.03px;width:45.00px;height:13.82px;color:#3a3a3a;background:#d9e1f2;line-height:15.62px;"><span style="display:inline-block;--w:38.0px">商品C合計</span></div>
<div class="cell" style="left:484.70px;top:131.03px;width:45.80px;height:13.82px;color:#3a3a3a;background:#d9e1f2;line-height:15.62px;"><span style="display:inline-block;--w:24.0px">総合計</span></div>
<div class="cell" style="left:96.40px;top:144.85px;width:39.70px;height:13.82px;color:#3a3a3a;line-height:15.62px;"><span style="display:inline-block;--w:16.0px">東京</span></div>
<div class="cell" style="left:136.10px;top:144.85px;width:39.70px;height:13.82px;color:#3a3a3a;line-height:15.62px;"><span style="display:inline-block;--w:22.0px">店舗A</span></div>
<div class="cell" style="left:175.80px;top:144.85px;width:39.70px;height:13.82px;color:#3a3a3a;line-height:15.62px;"><span style="display:inline-block;--w:16.0px">田中</span></div>
<div class="cell num" style="left:215.50px;top:144.85px;width:45.00px;height:13.82px;color:#3a3a3a;line-height:15.62px;">19</div>
<div class="cell num" style="left:260.50px;top:144.85px;width:44.50px;height:13.82px;color:#3a3a3a;line-height:15.62px;">22800</div>
<div class="cell num" style="left:305.00px;top:144.85px;width:44.80px;height:13.82px;color:#3a3a3a;line-height:15.62px;">13</div>
<div class="cell num" style="left:349.80px;top:144.85px;width:44.90px;height:13.82px;color:#3a3a3a;line-height:15.62px;">19500</div>
<div class="cell num" style="left:394.70px;top:144.85px;width:45.00px;height:13.82px;color:#3a3a3a;line-height:15.62px;">10</div>
<div class="cell num" style="left:439.70px;top:144.85px;width:45.00px;height:13.82px;color:#3a3a3a;line-height:15.62px;">20000</div>
<div class="cell num" style="left:484.70px;top:144.85px;width:45.80px;height:13.82px;color:#3a3a3a;line-height:15.62px;">62300</div>
<div class="cell" style="left:96.40px;top:158.67px;width:39.70px;height:13.82px;color:#3a3a3a;line-height:15.62px;"><span style="display:inline-block;--w:16.0px">東京</span></div>
<div class="cell" style="left:136.10px;top:158.67px;width:39.70px;height:13.82px;color:#3a3a3a;line-height:15.62px;"><span style="display:inline-block;--w:22.0px">店舗B</span></div>
<div class="cell" style="left:175.80px;top:158.67px;width:39.70px;height:13.82px;color:#3a3a3a;line-height:15.62px;"><span style="display:inline-block;--w:16.0px">山田</span></div>
<div class="cell num" style="left:215.50px;top:158.67px;width:45.00px;height:13.82px;color:#3a3a3a;line-height:15.62px;">17</div>
<div class="cell num" style="left:260.50px;top:158.67px;width:44.50px;height:13.82px;color:#3a3a3a;line-height:15.62px;">20400</div>
<div class="cell num" style="left:305.00px;top:158.67px;width:44.80px;height:13.82px;color:#3a3a3a;line-height:15.62px;">10</div>
<div class="cell num" style="left:349.80px;top:158.67px;width:44.90px;height:13.82px;color:#3a3a3a;line-height:15.62px;">15000</div>
<div class="cell num" style="left:394.70px;top:158.67px;width:45.00px;height:13.82px;color:#3a3a3a;line-height:15.62px;">7</div>
<div class="cell num" style="left:439.70px;top:158.67px;width:45.00px;height:13.82px;color:#3a3a3a;line-height:15.62px;">14000</div>
<div class="cell num" style="left:484.70px;top:158.67px;width:45.80px;height:13.82px;color:#3a3a3a;line-height:15.62px;">49400</div>
<div class="cell" style="left:96.40px;top:172.49px;width:39.70px;height:13.82px;color:#3a3a3a;line-height:15.62px;"><span style="display:inline-block;--w:16.0px">東京</span></div>
<div class="cell" style="left:136.10px;top:172.49px;width:39.70px;height:13.82px;color:#3a3a3a;line-height:15.62px;"><span style="display:inline-block;--w:22.0px">店舗C</span></div>
<div class="cell" style="left:175.80px;top:172.49px;width:39.70px;height:13.82px;color:#3a3a3a;line-height:15.62px;"><span style="display:inline-block;--w:16.0px">鈴木</span></div>
<div class="cell num" style="left:215.50px;top:172.49px;width:45.00px;height:13.82px;color:#3a3a3a;line-height:15.62px;">18</div>
<div class="cell num" style="left:260.50px;top:172.49px;width:44.50px;height:13.82px;color:#3a3a3a;line-height:15.62px;">21600</div>
<div class="cell num" style="left:305.00px;top:172.49px;width:44.80px;height:13.82px;color:#3a3a3a;line-height:15.62px;">13</div>
<div class="cell num" style="left:349.80px;top:172.49px;width:44.90px;height:13.82px;color:#3a3a3a;line-height:15.62px;">19500</div>
<div class="cell num" style="left:394.70px;top:172.49px;width:45.00px;height:13.82px;color:#3a3a3a;line-height:15.62px;">5</div>
<div class="cell num" style="left:439.70px;top:172.49px;width:45.00px;height:13.82px;color:#3a3a3a;line-height:15.62px;">10000</div>
<div class="cell num" style="left:484.70px;top:172.49px;width:45.80px;height:13.82px;color:#3a3a3a;line-height:15.62px;">51100</div>
<div class="cell" style="left:96.40px;top:186.31px;width:39.70px;height:13.82px;color:#3a3a3a;line-height:15.62px;"><span style="display:inline-block;--w:16.0px">大阪</span></div>
<div class="cell" style="left:136.10px;top:186.31px;width:39.70px;height:13.82px;color:#3a3a3a;line-height:15.62px;"><span style="display:inline-block;--w:22.0px">店舗A</span></div>
<div class="cell" style="left:175.80px;top:186.31px;width:39.70px;height:13.82px;color:#3a3a3a;line-height:15.62px;"><span style="display:inline-block;--w:16.0px">山本</span></div>
<div class="cell num" style="left:215.50px;top:186.31px;width:45.00px;height:13.82px;color:#3a3a3a;line-height:15.62px;">15</div>
<div class="cell num" style="left:260.50px;top:186.31px;width:44.50px;height:13.82px;color:#3a3a3a;line-height:15.62px;">18000</div>
<div class="cell num" style="left:305.00px;top:186.31px;width:44.80px;height:13.82px;color:#3a3a3a;line-height:15.62px;">6</div>
<div class="cell num" style="left:349.80px;top:186.31px;width:44.90px;height:13.82px;color:#3a3a3a;line-height:15.62px;">9000</div>
<div class="cell num" style="left:394.70px;top:186.31px;width:45.00px;height:13.82px;color:#3a3a3a;line-height:15.62px;">9</div>
<div class="cell num" style="left:439.70px;top:186.31px;width:45.00px;height:13.82px;color:#3a3a3a;line-height:15.62px;">18000</div>
<div class="cell num" style="left:484.70px;top:186.31px;width:45.80px;height:13.82px;color:#3a3a3a;line-height:15.62px;">45000</div>
<div class="cell" style="left:96.40px;top:200.13px;width:39.70px;height:13.82px;color:#3a3a3a;line-height:15.62px;"><span style="display:inline-block;--w:16.0px">大阪</span></div>
<div class="cell" style="left:136.10px;top:200.13px;width:39.70px;height:13.82px;color:#3a3a3a;line-height:15.62px;"><span style="display:inline-block;--w:22.0px">店舗B</span></div>
<div class="cell" style="left:175.80px;top:200.13px;width:39.70px;height:13.82px;color:#3a3a3a;line-height:15.62px;"><span style="display:inline-block;--w:16.0px">佐藤</span></div>
<div class="cell num" style="left:215.50px;top:200.13px;width:45.00px;height:13.82px;color:#3a3a3a;line-height:15.62px;">16</div>
<div class="cell num" style="left:260.50px;top:200.13px;width:44.50px;height:13.82px;color:#3a3a3a;line-height:15.62px;">19200</div>
<div class="cell num" style="left:305.00px;top:200.13px;width:44.80px;height:13.82px;color:#3a3a3a;line-height:15.62px;">10</div>
<div class="cell num" style="left:349.80px;top:200.13px;width:44.90px;height:13.82px;color:#3a3a3a;line-height:15.62px;">15000</div>
<div class="cell num" style="left:394.70px;top:200.13px;width:45.00px;height:13.82px;color:#3a3a3a;line-height:15.62px;">4</div>
<div class="cell num" style="left:439.70px;top:200.13px;width:45.00px;height:13.82px;color:#3a3a3a;line-height:15.62px;">8000</div>
<div class="cell num" style="left:484.70px;top:200.13px;width:45.80px;height:13.82px;color:#3a3a3a;line-height:15.62px;">42200</div>
<div class="cell" style="left:96.40px;top:213.95px;width:39.70px;height:13.82px;color:#3a3a3a;line-height:15.62px;"><span style="display:inline-block;--w:16.0px">大阪</span></div>
<div class="cell" style="left:136.10px;top:213.95px;width:39.70px;height:13.82px;color:#3a3a3a;line-height:15.62px;"><span style="display:inline-block;--w:22.0px">店舗C</span></div>
<div class="cell" style="left:175.80px;top:213.95px;width:39.70px;height:13.82px;color:#3a3a3a;line-height:15.62px;"><span style="display:inline-block;--w:16.0px">大田</span></div>
<div class="cell num" style="left:215.50px;top:213.95px;width:45.00px;height:13.82px;color:#3a3a3a;line-height:15.62px;">13</div>
<div class="cell num" style="left:260.50px;top:213.95px;width:44.50px;height:13.82px;color:#3a3a3a;line-height:15.62px;">15600</div>
<div class="cell num" style="left:305.00px;top:213.95px;width:44.80px;height:13.82px;color:#3a3a3a;line-height:15.62px;">7</div>
<div class="cell num" style="left:349.80px;top:213.95px;width:44.90px;height:13.82px;color:#3a3a3a;line-height:15.62px;">10500</div>
<div class="cell num" style="left:394.70px;top:213.95px;width:45.00px;height:13.82px;color:#3a3a3a;line-height:15.62px;">5</div>
<div class="cell num" style="left:439.70px;top:213.95px;width:45.00px;height:13.82px;color:#3a3a3a;line-height:15.62px;">10000</div>
<div class="cell num" style="left:484.70px;top:213.95px;width:45.80px;height:13.82px;color:#3a3a3a;line-height:15.62px;">36100</div>
<div class="cell" style="left:96.40px;top:227.77px;width:39.70px;height:13.82px;color:#3a3a3a;line-height:15.62px;"><span style="display:inline-block;--w:16.0px">福岡</span></div>
<div class="cell" style="left:136.10px;top:227.77px;width:39.70px;height:13.82px;color:#3a3a3a;line-height:15.62px;"><span style="display:inline-block;--w:22.0px">店舗A</span></div>
<div class="cell" style="left:175.80px;top:227.77px;width:39.70px;height:13.82px;color:#3a3a3a;line-height:15.62px;"><span style="display:inline-block;--w:16.0px">井上</span></div>
<div class="cell num" style="left:215.50px;top:227.77px;width:45.00px;height:13.82px;color:#3a3a3a;line-height:15.62px;">15</div>
<div class="cell num" style="left:260.50px;top:227.77px;width:44.50px;height:13.82px;color:#3a3a3a;line-height:15.62px;">18000</div>
<div class="cell num" style="left:305.00px;top:227.77px;width:44.80px;height:13.82px;color:#3a3a3a;line-height:15.62px;">8</div>
<div class="cell num" style="left:349.80px;top:227.77px;width:44.90px;height:13.82px;color:#3a3a3a;line-height:15.62px;">12000</div>
<div class="cell num" style="left:394.70px;top:227.77px;width:45.00px;height:13.82px;color:#3a3a3a;line-height:15.62px;">4</div>
<div class="cell num" style="left:439.70px;top:227.77px;width:45.00px;height:13.82px;color:#3a3a3a;line-height:15.62px;">8000</div>
<div class="cell num" style="left:484.70px;top:227.77px;width:45.80px;height:13.82px;color:#3a3a3a;line-height:15.62px;">38000</div>
<div class="cell" style="left:96.40px;top:241.59px;width:39.70px;height:13.82px;color:#3a3a3a;line-height:15.62px;"><span style="display:inline-block;--w:16.0px">福岡</span></div>
<div class="cell" style="left:136.10px;top:241.59px;width:39.70px;height:13.82px;color:#3a3a3a;line-height:15.62px;"><span style="display:inline-block;--w:22.0px">店舗B</span></div>
<div class="cell" style="left:175.80px;top:241.59px;width:39.70px;height:13.82px;color:#3a3a3a;line-height:15.62px;"><span style="display:inline-block;--w:16.0px">高橋</span></div>
<div class="cell num" style="left:215.50px;top:241.59px;width:45.00px;height:13.82px;color:#3a3a3a;line-height:15.62px;">11</div>
<div class="cell num" style="left:260.50px;top:241.59px;width:44.50px;height:13.82px;color:#3a3a3a;line-height:15.62px;">13200</div>
<div class="cell num" style="left:305.00px;top:241.59px;width:44.80px;height:13.82px;color:#3a3a3a;line-height:15.62px;">4</div>
<div class="cell num" style="left:349.80px;top:241.59px;width:44.90px;height:13.82px;color:#3a3a3a;line-height:15.62px;">6000</div>
<div class="cell num" style="left:394.70px;top:241.59px;width:45.00px;height:13.82px;color:#3a3a3a;line-height:15.62px;">8</div>
<div class="cell num" style="left:439.70px;top:241.59px;width:45.00px;height:13.82px;color:#3a3a3a;line-height:15.62px;">16000</div>
<div class="cell num" style="left:484.70px;top:241.59px;width:45.80px;height:13.82px;color:#3a3a3a;line-height:15.62px;">35200</div>
<div class="cell" style="left:96.40px;top:255.41px;width:39.70px;height:13.82px;color:#3a3a3a;line-height:15.62px;"><span style="display:inline-block;--w:16.0px">福岡</span></div>
<div class="cell" style="left:136.10px;top:255.41px;width:39.70px;height:13.82px;color:#3a3a3a;line-height:15.62px;"><span style="display:inline-block;--w:22.0px">店舗C</span></div>
<div class="cell" style="left:175.80px;top:255.41px;width:39.70px;height:13.82px;color:#3a3a3a;line-height:15.62px;"><span style="display:inline-block;--w:16.0px">渡辺</span></div>
<div class="cell num" style="left:215.50px;top:255.41px;width:45.00px;height:13.82px;color:#3a3a3a;line-height:15.62px;">14</div>
<div class="cell num" style="left:260.50px;top:255.41px;width:44.50px;height:13.82px;color:#3a3a3a;line-height:15.62px;">16800</div>
<div class="cell num" style="left:305.00px;top:255.41px;width:44.80px;height:13.82px;color:#3a3a3a;line-height:15.62px;">8</div>
<div class="cell num" style="left:349.80px;top:255.41px;width:44.90px;height:13.82px;color:#3a3a3a;line-height:15.62px;">12000</div>
<div class="cell num" style="left:394.70px;top:255.41px;width:45.00px;height:13.82px;color:#3a3a3a;line-height:15.62px;">5</div>
<div class="cell num" style="left:439.70px;top:255.41px;width:45.00px;height:13.82px;color:#3a3a3a;line-height:15.62px;">10000</div>
<div class="cell num" style="left:484.70px;top:255.41px;width:45.80px;height:13.82px;color:#3a3a3a;line-height:15.62px;">38800</div>
<div class="cell" style="left:96.40px;top:269.23px;width:39.70px;height:13.82px;color:#3a3a3a;line-height:15.62px;"><span style="display:inline-block;--w:16.0px">東京</span></div>
<div class="cell" style="left:136.10px;top:269.23px;width:39.70px;height:13.82px;color:#3a3a3a;line-height:15.62px;"><span style="display:inline-block;--w:22.0px">店舗A</span></div>
<div class="cell" style="left:175.80px;top:269.23px;width:39.70px;height:13.82px;color:#3a3a3a;line-height:15.62px;"><span style="display:inline-block;--w:16.0px">鈴木</span></div>
<div class="cell num" style="left:215.50px;top:269.23px;width:45.00px;height:13.82px;color:#3a3a3a;line-height:15.62px;">16</div>
<div class="cell num" style="left:260.50px;top:269.23px;width:44.50px;height:13.82px;color:#3a3a3a;line-height:15.62px;">19200</div>
<div class="cell num" style="left:305.00px;top:269.23px;width:44.80px;height:13.82px;color:#3a3a3a;line-height:15.62px;">12</div>
<div class="cell num" style="left:349.80px;top:269.23px;width:44.90px;height:13.82px;color:#3a3a3a;line-height:15.62px;">18000</div>
<div class="cell num" style="left:394.70px;top:269.23px;width:45.00px;height:13.82px;color:#3a3a3a;line-height:15.62px;">3</div>
<div class="cell num" style="left:439.70px;top:269.23px;width:45.00px;height:13.82px;color:#3a3a3a;line-height:15.62px;">6000</div>
<div class="cell num" style="left:484.70px;top:269.23px;width:45.80px;height:13.82px;color:#3a3a3a;line-height:15.62px;">43200</div>
<div class="cell" style="left:96.40px;top:283.05px;width:39.70px;height:13.82px;color:#3a3a3a;line-height:15.62px;"><span style="display:inline-block;--w:16.0px">東京</span></div>
<div class="cell" style="left:136.10px;top:283.05px;width:39.70px;height:13.82px;color:#3a3a3a;line-height:15.62px;"><span style="display:inline-block;--w:22.0px">店舗B</span></div>
<div class="cell" style="left:175.80px;top:283.05px;width:39.70px;height:13.82px;color:#3a3a3a;line-height:15.62px;"><span style="display:inline-block;--w:16.0px">田中</span></div>
<div class="cell num" style="left:215.50px;top:283.05px;width:45.00px;height:13.82px;color:#3a3a3a;line-height:15.62px;">15</div>
<div class="cell num" style="left:260.50px;top:283.05px;width:44.50px;height:13.82px;color:#3a3a3a;line-height:15.62px;">18000</div>
<div class="cell num" style="left:305.00px;top:283.05px;width:44.80px;height:13.82px;color:#3a3a3a;line-height:15.62px;">7</div>
<div class="cell num" style="left:349.80px;top:283.05px;width:44.90px;height:13.82px;color:#3a3a3a;line-height:15.62px;">10500</div>
<div class="cell num" style="left:394.70px;top:283.05px;width:45.00px;height:13.82px;color:#3a3a3a;line-height:15.62px;">7</div>
<div class="cell num" style="left:439.70px;top:283.05px;width:45.00px;height:13.82px;color:#3a3a3a;line-height:15.62px;">14000</div>
<div class="cell num" style="left:484.70px;top:283.05px;width:45.80px;height:13.82px;color:#3a3a3a;line-height:15.62px;">42500</div>
<div class="cell" style="left:96.40px;top:296.87px;width:39.70px;height:13.82px;color:#3a3a3a;line-height:15.62px;"><span style="display:inline-block;--w:16.0px">東京</span></div>
<div class="cell" style="left:136.10px;top:296.87px;width:39.70px;height:13.82px;color:#3a3a3a;line-height:15.62px;"><span style="display:inline-block;--w:22.0px">店舗C</span></div>
<div class="cell" style="left:175.80px;top:296.87px;width:39.70px;height:13.82px;color:#3a3a3a;line-height:15.62px;"><span style="display:inline-block;--w:16.0px">山田</span></div>
<div class="cell num" style="left:215.50px;top:296.87px;width:45.00px;height:13.82px;color:#3a3a3a;line-height:15.62px;">14</div>
<div class="cell num" style="left:260.50px;top:296.87px;width:44.50px;height:13.82px;color:#3a3a3a;line-height:15.62px;">16800</div>
<div class="cell num" style="left:305.00px;top:296.87px;width:44.80px;height:13.82px;color:#3a3a3a;line-height:15.62px;">9</div>
<div class="cell num" style="left:349.80px;top:296.87px;width:44.90px;height:13.82px;color:#3a3a3a;line-height:15.62px;">13500</div>
<div class="cell num" style="left:394.70px;top:296.87px;width:45.00px;height:13.82px;color:#3a3a3a;line-height:15.62px;">3</div>
<div class="cell num" style="left:439.70px;top:296.87px;width:45.00px;height:13.82px;color:#3a3a3a;line-height:15.62px;">6000</div>
<div class="cell num" style="left:484.70px;top:296.87px;width:45.80px;height:13.82px;color:#3a3a3a;line-height:15.62px;">36300</div>
<div class="cell" style="left:96.40px;top:310.69px;width:39.70px;height:13.82px;color:#3a3a3a;line-height:15.62px;"><span style="display:inline-block;--w:16.0px">大阪</span></div>
<div class="cell" style="left:136.10px;top:310.69px;width:39.70px;height:13.82px;color:#3a3a3a;line-height:15.62px;"><span style="display:inline-block;--w:22.0px">店舗A</span></div>
<div class="cell" style="left:175.80px;top:310.69px;width:39.70px;height:13.82px;color:#3a3a3a;line-height:15.62px;"><span style="display:inline-block;--w:16.0px">佐藤</span></div>
<div class="cell num" style="left:215.50px;top:310.69px;width:45.00px;height:13.82px;color:#3a3a3a;line-height:15.62px;">15</div>
<div class="cell num" style="left:260.50px;top:310.69px;width:44.50px;height:13.82px;color:#3a3a3a;line-height:15.62px;">18000</div>
<div class="cell num" style="left:305.00px;top:310.69px;width:44.80px;height:13.82px;color:#3a3a3a;line-height:15.62px;">4</div>
<div class="cell num" style="left:349.80px;top:310.69px;width:44.90px;height:13.82px;color:#3a3a3a;line-height:15.62px;">6000</div>
<div class="cell num" style="left:394.70px;top:310.69px;width:45.00px;height:13.82px;color:#3a3a3a;line-height:15.62px;">8</div>
<div class="cell num" style="left:439.70px;top:310.69px;width:45.00px;height:13.82px;color:#3a3a3a;line-height:15.62px;">16000</div>
<div class="cell num" style="left:484.70px;top:310.69px;width:45.80px;height:13.82px;color:#3a3a3a;line-height:15.62px;">40000</div>
<div class="cell" style="left:96.40px;top:324.51px;width:39.70px;height:13.82px;color:#3a3a3a;line-height:15.62px;"><span style="display:inline-block;--w:16.0px">大阪</span></div>
<div class="cell" style="left:136.10px;top:324.51px;width:39.70px;height:13.82px;color:#3a3a3a;line-height:15.62px;"><span style="display:inline-block;--w:22.0px">店舗B</span></div>
<div class="cell" style="left:175.80px;top:324.51px;width:39.70px;height:13.82px;color:#3a3a3a;line-height:15.62px;"><span style="display:inline-block;--w:16.0px">大田</span></div>
<div class="cell num" style="left:215.50px;top:324.51px;width:45.00px;height:13.82px;color:#3a3a3a;line-height:15.62px;">14</div>
<div class="cell num" style="left:260.50px;top:324.51px;width:44.50px;height:13.82px;color:#3a3a3a;line-height:15.62px;">16800</div>
<div class="cell num" style="left:305.00px;top:324.51px;width:44.80px;height:13.82px;color:#3a3a3a;line-height:15.62px;">6</div>
<div class="cell num" style="left:349.80px;top:324.51px;width:44.90px;height:13.82px;color:#3a3a3a;line-height:15.62px;">9000</div>
<div class="cell num" style="left:394.70px;top:324.51px;width:45.00px;height:13.82px;color:#3a3a3a;line-height:15.62px;">6</div>
<div class="cell num" style="left:439.70px;top:324.51px;width:45.00px;height:13.82px;color:#3a3a3a;line-height:15.62px;">12000</div>
<div class="cell num" style="left:484.70px;top:324.51px;width:45.80px;height:13.82px;color:#3a3a3a;line-height:15.62px;">37800</div>
<div class="cell" style="left:96.40px;top:338.33px;width:39.70px;height:13.82px;color:#3a3a3a;line-height:15.62px;"><span style="display:inline-block;--w:16.0px">大阪</span></div>
<div class="cell" style="left:136.10px;top:338.33px;width:39.70px;height:13.82px;color:#3a3a3a;line-height:15.62px;"><span style="display:inline-block;--w:22.0px">店舗C</span></div>
<div class="cell" style="left:175.80px;top:338.33px;width:39.70px;height:13.82px;color:#3a3a3a;line-height:15.62px;"><span style="display:inline-block;--w:16.0px">山本</span></div>
<div class="cell num" style="left:215.50px;top:338.33px;width:45.00px;height:13.82px;color:#3a3a3a;line-height:15.62px;">13</div>
<div class="cell num" style="left:260.50px;top:338.33px;width:44.50px;height:13.82px;color:#3a3a3a;line-height:15.62px;">15600</div>
<div class="cell num" style="left:305.00px;top:338.33px;width:44.80px;height:13.82px;color:#3a3a3a;line-height:15.62px;">8</div>
<div class="cell num" style="left:349.80px;top:338.33px;width:44.90px;height:13.82px;color:#3a3a3a;line-height:15.62px;">12000</div>
<div class="cell num" style="left:394.70px;top:338.33px;width:45.00px;height:13.82px;color:#3a3a3a;line-height:15.62px;">4</div>
<div class="cell num" style="left:439.70px;top:338.33px;width:45.00px;height:13.82px;color:#3a3a3a;line-height:15.62px;">8000</div>
<div class="cell num" style="left:484.70px;top:338.33px;width:45.80px;height:13.82px;color:#3a3a3a;line-height:15.62px;">35600</div>
<div class="cell" style="left:96.40px;top:352.15px;width:39.70px;height:13.82px;color:#3a3a3a;line-height:15.62px;"><span style="display:inline-block;--w:16.0px">福岡</span></div>
<div class="cell" style="left:136.10px;top:352.15px;width:39.70px;height:13.82px;color:#3a3a3a;line-height:15.62px;"><span style="display:inline-block;--w:22.0px">店舗A</span></div>
<div class="cell" style="left:175.80px;top:352.15px;width:39.70px;height:13.82px;color:#3a3a3a;line-height:15.62px;"><span style="display:inline-block;--w:16.0px">高橋</span></div>
<div class="cell num" style="left:215.50px;top:352.15px;width:45.00px;height:13.82px;color:#3a3a3a;line-height:15.62px;">16</div>
<div class="cell num" style="left:260.50px;top:352.15px;width:44.50px;height:13.82px;color:#3a3a3a;line-height:15.62px;">19200</div>
<div class="cell num" style="left:305.00px;top:352.15px;width:44.80px;height:13.82px;color:#3a3a3a;line-height:15.62px;">4</div>
<div class="cell num" style="left:349.80px;top:352.15px;width:44.90px;height:13.82px;color:#3a3a3a;line-height:15.62px;">6000</div>
<div class="cell num" style="left:394.70px;top:352.15px;width:45.00px;height:13.82px;color:#3a3a3a;line-height:15.62px;">7</div>
<div class="cell num" style="left:439.70px;top:352.15px;width:45.00px;height:13.82px;color:#3a3a3a;line-height:15.62px;">14000</div>
<div class="cell num" style="left:484.70px;top:352.15px;width:45.80px;height:13.82px;color:#3a3a3a;line-height:15.62px;">39200</div>
<div class="cell" style="left:96.40px;top:365.97px;width:39.70px;height:13.82px;color:#3a3a3a;line-height:15.62px;"><span style="display:inline-block;--w:16.0px">福岡</span></div>
<div class="cell" style="left:136.10px;top:365.97px;width:39.70px;height:13.82px;color:#3a3a3a;line-height:15.62px;"><span style="display:inline-block;--w:22.0px">店舗B</span></div>
<div class="cell" style="left:175.80px;top:365.97px;width:39.70px;height:13.82px;color:#3a3a3a;line-height:15.62px;"><span style="display:inline-block;--w:16.0px">渡辺</span></div>
<div class="cell num" style="left:215.50px;top:365.97px;width:45.00px;height:13.82px;color:#3a3a3a;line-height:15.62px;">19</div>
<div class="cell num" style="left:260.50px;top:365.97px;width:44.50px;height:13.82px;color:#3a3a3a;line-height:15.62px;">22800</div>
<div class="cell num" style="left:305.00px;top:365.97px;width:44.80px;height:13.82px;color:#3a3a3a;line-height:15.62px;">5</div>
<div class="cell num" style="left:349.80px;top:365.97px;width:44.90px;height:13.82px;color:#3a3a3a;line-height:15.62px;">7500</div>
<div class="cell num" style="left:394.70px;top:365.97px;width:45.00px;height:13.82px;color:#3a3a3a;line-height:15.62px;">5</div>
<div class="cell num" style="left:439.70px;top:365.97px;width:45.00px;height:13.82px;color:#3a3a3a;line-height:15.62px;">10000</div>
<div class="cell num" style="left:484.70px;top:365.97px;width:45.80px;height:13.82px;color:#3a3a3a;line-height:15.62px;">40300</div>
<div class="cell" style="left:96.40px;top:379.79px;width:39.70px;height:13.82px;color:#3a3a3a;line-height:15.62px;"><span style="display:inline-block;--w:16.0px">福岡</span></div>
<div class="cell" style="left:136.10px;top:379.79px;width:39.70px;height:13.82px;color:#3a3a3a;line-height:15.62px;"><span style="display:inline-block;--w:22.0px">店舗C</span></div>
<div class="cell" style="left:175.80px;top:379.79px;width:39.70px;height:13.82px;color:#3a3a3a;line-height:15.62px;"><span style="display:inline-block;--w:16.0px">井上</span></div>
<div class="cell num" style="left:215.50px;top:379.79px;width:45.00px;height:13.82px;color:#3a3a3a;line-height:15.62px;">17</div>
<div class="cell num" style="left:260.50px;top:379.79px;width:44.50px;height:13.82px;color:#3a3a3a;line-height:15.62px;">20400</div>
<div class="cell num" style="left:305.00px;top:379.79px;width:44.80px;height:13.82px;color:#3a3a3a;line-height:15.62px;">6</div>
<div class="cell num" style="left:349.80px;top:379.79px;width:44.90px;height:13.82px;color:#3a3a3a;line-height:15.62px;">9000</div>
<div class="cell num" style="left:394.70px;top:379.79px;width:45.00px;height:13.82px;color:#3a3a3a;line-height:15.62px;">6</div>
<div class="cell num" style="left:439.70px;top:379.79px;width:45.00px;height:13.82px;color:#3a3a3a;line-height:15.62px;">12000</div>
<div class="cell num" style="left:484.70px;top:379.79px;width:45.80px;height:13.82px;color:#3a3a3a;line-height:15.62px;">41400</div>
<div class="a" style="left:135.10px;top:130.03px;width:1px;height:263.58px;background:#747474"></div><div class="a" style="left:174.80px;top:130.03px;width:1px;height:263.58px;background:#747474"></div><div class="a" style="left:214.50px;top:130.03px;width:1px;height:263.58px;background:#747474"></div><div class="a" style="left:259.50px;top:130.03px;width:1px;height:263.58px;background:#747474"></div><div class="a" style="left:304.00px;top:130.03px;width:1px;height:263.58px;background:#747474"></div><div class="a" style="left:348.80px;top:130.03px;width:1px;height:263.58px;background:#747474"></div><div class="a" style="left:393.70px;top:130.03px;width:1px;height:263.58px;background:#747474"></div><div class="a" style="left:438.70px;top:130.03px;width:1px;height:263.58px;background:#747474"></div><div class="a" style="left:483.70px;top:130.03px;width:1px;height:263.58px;background:#747474"></div><div class="a" style="left:529.50px;top:130.03px;width:1px;height:263.58px;background:#747474"></div><div class="a" style="left:95.40px;top:143.85px;width:435.10px;height:1px;background:#747474"></div><div class="a" style="left:95.40px;top:157.67px;width:435.10px;height:1px;background:#747474"></div><div class="a" style="left:95.40px;top:171.49px;width:435.10px;height:1px;background:#747474"></div><div class="a" style="left:95.40px;top:185.31px;width:435.10px;height:1px;background:#747474"></div><div class="a" style="left:95.40px;top:199.13px;width:435.10px;height:1px;background:#747474"></div><div class="a" style="left:95.40px;top:212.95px;width:435.10px;height:1px;background:#747474"></div><div class="a" style="left:95.40px;top:226.77px;width:435.10px;height:1px;background:#747474"></div><div class="a" style="left:95.40px;top:240.59px;width:435.10px;height:1px;background:#747474"></div><div class="a" style="left:95.40px;top:254.41px;width:435.10px;height:1px;background:#747474"></div><div class="a" style="left:95.40px;top:268.23px;width:435.10px;height:1px;background:#747474"></div><div class="a" style="left:95.40px;top:282.05px;width:435.10px;height:1px;background:#747474"></div><div class="a" style="left:95.40px;top:295.87px;width:435.10px;height:1px;background:#747474"></div><div class="a" style="left:95.40px;top:309.69px;width:435.10px;height:1px;background:#747474"></div><div class="a" style="left:95.40px;top:323.51px;width:435.10px;height:1px;background:#747474"></div><div class="a" style="left:95.40px;top:337.33px;width:435.10px;height:1px;background:#747474"></div><div class="a" style="left:95.40px;top:351.15px;width:435.10px;height:1px;background:#747474"></div><div class="a" style="left:95.40px;top:364.97px;width:435.10px;height:1px;background:#747474"></div><div class="a" style="left:95.40px;top:378.79px;width:435.10px;height:1px;background:#747474"></div><div class="a" style="left:95.40px;top:392.61px;width:435.10px;height:1px;background:#747474"></div>
<div class="cell" style="left:570.00px;top:131.03px;width:37.80px;height:13.82px;color:#3a3a3a;background:#fce4d6;line-height:15.62px;"><span style="display:inline-block;--w:24.0px">商品名</span></div>
<div class="cell" style="left:607.80px;top:131.03px;width:38.50px;height:13.82px;color:#3a3a3a;background:#fce4d6;line-height:15.62px;"><span style="display:inline-block;--w:16.0px">単価</span></div>
<div class="cell" style="left:570.00px;top:144.85px;width:37.80px;height:13.82px;color:#3a3a3a;line-height:15.62px;"><span style="display:inline-block;--w:22.0px">商品A</span></div>
<div class="cell num" style="left:607.80px;top:144.85px;width:38.50px;height:13.82px;color:#3a3a3a;line-height:15.62px;">1200</div>
<div class="cell" style="left:570.00px;top:158.67px;width:37.80px;height:13.82px;color:#3a3a3a;line-height:15.62px;"><span style="display:inline-block;--w:22.0px">商品B</span></div>
<div class="cell num" style="left:607.80px;top:158.67px;width:38.50px;height:13.82px;color:#3a3a3a;line-height:15.62px;">1500</div>
<div class="cell" style="left:570.00px;top:172.49px;width:37.80px;height:13.82px;color:#3a3a3a;line-height:15.62px;"><span style="display:inline-block;--w:22.0px">商品C</span></div>
<div class="cell num" style="left:607.80px;top:172.49px;width:38.50px;height:13.82px;color:#3a3a3a;line-height:15.62px;">2000</div>
<div class="a" style="left:569.00px;top:130.03px;width:1px;height:56.28px;background:#747474"></div><div class="a" style="left:606.80px;top:130.03px;width:1px;height:56.28px;background:#747474"></div><div class="a" style="left:645.30px;top:130.03px;width:1px;height:56.28px;background:#747474"></div><div class="a" style="left:569.00px;top:143.85px;width:77.30px;height:1px;background:#747474"></div><div class="a" style="left:569.00px;top:157.67px;width:77.30px;height:1px;background:#747474"></div><div class="a" style="left:569.00px;top:171.49px;width:77.30px;height:1px;background:#747474"></div><div class="a" style="left:569.00px;top:185.31px;width:77.30px;height:1px;background:#747474"></div>
<div class="cell" style="left:570.00px;top:200.13px;width:37.80px;height:13.82px;color:#3a3a3a;background:#e7e6e6;line-height:15.62px;"><span style="display:inline-block;--w:32.0px">都道府県</span></div>
<div class="cell" style="left:607.80px;top:200.13px;width:38.50px;height:13.82px;color:#3a3a3a;background:#e7e6e6;line-height:15.62px;"><span style="display:inline-block;--w:24.0px">店舗名</span></div>
<div class="cell" style="left:646.30px;top:200.13px;width:39.50px;height:13.82px;color:#3a3a3a;background:#e7e6e6;line-height:15.62px;"><span style="display:inline-block;--w:24.0px">担当者</span></div>
<div class="cell" style="left:570.00px;top:213.95px;width:37.80px;height:41.46px;color:#3a3a3a;text-align:center;line-height:43.26px;"><span style="display:inline-block;--w:16.0px">東京</span></div>
<div class="cell" style="left:607.80px;top:213.95px;width:38.50px;height:13.82px;color:#3a3a3a;line-height:15.62px;"><span style="display:inline-block;--w:22.0px">店舗A</span></div>
<div class="cell" style="left:646.30px;top:213.95px;width:39.50px;height:13.82px;color:#3a3a3a;line-height:15.62px;"><span style="display:inline-block;--w:16.0px">田中</span></div>
<div class="cell" style="left:607.80px;top:227.77px;width:38.50px;height:13.82px;color:#3a3a3a;line-height:15.62px;"><span style="display:inline-block;--w:22.0px">店舗B</span></div>
<div class="cell" style="left:646.30px;top:227.77px;width:39.50px;height:13.82px;color:#3a3a3a;line-height:15.62px;"><span style="display:inline-block;--w:16.0px">山田</span></div>
<div class="cell" style="left:607.80px;top:241.59px;width:38.50px;height:13.82px;color:#3a3a3a;line-height:15.62px;"><span style="display:inline-block;--w:22.0px">店舗C</span></div>
<div class="cell" style="left:646.30px;top:241.59px;width:39.50px;height:13.82px;color:#3a3a3a;line-height:15.62px;"><span style="display:inline-block;--w:16.0px">鈴木</span></div>
<div class="cell" style="left:570.00px;top:255.41px;width:37.80px;height:41.46px;color:#3a3a3a;text-align:center;line-height:43.26px;"><span style="display:inline-block;--w:16.0px">大阪</span></div>
<div class="cell" style="left:607.80px;top:255.41px;width:38.50px;height:13.82px;color:#3a3a3a;line-height:15.62px;"><span style="display:inline-block;--w:22.0px">店舗A</span></div>
<div class="cell" style="left:646.30px;top:255.41px;width:39.50px;height:13.82px;color:#3a3a3a;line-height:15.62px;"><span style="display:inline-block;--w:16.0px">山本</span></div>
<div class="cell" style="left:607.80px;top:269.23px;width:38.50px;height:13.82px;color:#3a3a3a;line-height:15.62px;"><span style="display:inline-block;--w:22.0px">店舗B</span></div>
<div class="cell" style="left:646.30px;top:269.23px;width:39.50px;height:13.82px;color:#3a3a3a;line-height:15.62px;"><span style="display:inline-block;--w:16.0px">佐藤</span></div>
<div class="cell" style="left:607.80px;top:283.05px;width:38.50px;height:13.82px;color:#3a3a3a;line-height:15.62px;"><span style="display:inline-block;--w:22.0px">店舗C</span></div>
<div class="cell" style="left:646.30px;top:283.05px;width:39.50px;height:13.82px;color:#3a3a3a;line-height:15.62px;"><span style="display:inline-block;--w:16.0px">大田</span></div>
<div class="cell" style="left:570.00px;top:296.87px;width:37.80px;height:41.46px;color:#3a3a3a;text-align:center;line-height:43.26px;"><span style="display:inline-block;--w:16.0px">福岡</span></div>
<div class="cell" style="left:607.80px;top:296.87px;width:38.50px;height:13.82px;color:#3a3a3a;line-height:15.62px;"><span style="display:inline-block;--w:22.0px">店舗A</span></div>
<div class="cell" style="left:646.30px;top:296.87px;width:39.50px;height:13.82px;color:#3a3a3a;line-height:15.62px;"><span style="display:inline-block;--w:16.0px">井上</span></div>
<div class="cell" style="left:607.80px;top:310.69px;width:38.50px;height:13.82px;color:#3a3a3a;line-height:15.62px;"><span style="display:inline-block;--w:22.0px">店舗B</span></div>
<div class="cell" style="left:646.30px;top:310.69px;width:39.50px;height:13.82px;color:#3a3a3a;line-height:15.62px;"><span style="display:inline-block;--w:16.0px">高橋</span></div>
<div class="cell" style="left:607.80px;top:324.51px;width:38.50px;height:13.82px;color:#3a3a3a;line-height:15.62px;"><span style="display:inline-block;--w:22.0px">店舗C</span></div>
<div class="cell" style="left:646.30px;top:324.51px;width:39.50px;height:13.82px;color:#3a3a3a;line-height:15.62px;"><span style="display:inline-block;--w:16.0px">渡辺</span></div>
<div class="a" style="left:569.00px;top:199.13px;width:1px;height:139.20px;background:#747474"></div><div class="a" style="left:606.80px;top:199.13px;width:1px;height:139.20px;background:#747474"></div><div class="a" style="left:645.30px;top:199.13px;width:1px;height:139.20px;background:#747474"></div><div class="a" style="left:684.80px;top:199.13px;width:1px;height:139.20px;background:#747474"></div><div class="a" style="left:569.00px;top:199.13px;width:116.80px;height:1px;background:#747474"></div><div class="a" style="left:569.00px;top:212.95px;width:116.80px;height:1px;background:#747474"></div><div class="a" style="left:606.80px;top:226.77px;width:79.00px;height:1px;background:#747474"></div><div class="a" style="left:606.80px;top:240.59px;width:79.00px;height:1px;background:#747474"></div><div class="a" style="left:569.00px;top:254.41px;width:116.80px;height:1px;background:#747474"></div><div class="a" style="left:606.80px;top:268.23px;width:79.00px;height:1px;background:#747474"></div><div class="a" style="left:606.80px;top:282.05px;width:79.00px;height:1px;background:#747474"></div><div class="a" style="left:569.00px;top:295.87px;width:116.80px;height:1px;background:#747474"></div><div class="a" style="left:606.80px;top:309.69px;width:79.00px;height:1px;background:#747474"></div><div class="a" style="left:606.80px;top:323.51px;width:79.00px;height:1px;background:#747474"></div><div class="a" style="left:569.00px;top:337.33px;width:116.80px;height:1px;background:#747474"></div>
<div class="cell" style="left:96.40px;top:407.43px;width:39.70px;height:13.82px;color:#3a3a3a;background:#fff2cc;line-height:15.62px;"><span style="display:inline-block;--w:32.0px">都道府県</span></div>
<div class="cell" style="left:136.10px;top:407.43px;width:39.70px;height:13.82px;color:#3a3a3a;background:#fff2cc;line-height:15.62px;"><span style="display:inline-block;--w:24.0px">店舗名</span></div>
<div class="cell" style="left:175.80px;top:407.43px;width:39.70px;height:13.82px;color:#3a3a3a;background:#fff2cc;line-height:15.62px;"><span style="display:inline-block;--w:16.0px">合計</span></div>
<div class="cell" style="left:96.40px;top:421.25px;width:39.70px;height:13.82px;color:#3a3a3a;line-height:15.62px;"><span style="display:inline-block;--w:16.0px">東京</span></div>
<div class="cell" style="left:136.10px;top:421.25px;width:39.70px;height:13.82px;color:#3a3a3a;line-height:15.62px;"><span style="display:inline-block;--w:22.0px">店舗A</span></div>
<div class="cell num" style="left:175.80px;top:421.25px;width:39.70px;height:13.82px;color:#3a3a3a;line-height:15.62px;">105500</div>
<div class="a" style="left:135.10px;top:406.43px;width:1px;height:28.64px;background:#747474"></div><div class="a" style="left:174.80px;top:406.43px;width:1px;height:28.64px;background:#747474"></div><div class="a" style="left:214.50px;top:406.43px;width:1px;height:28.64px;background:#747474"></div><div class="a" style="left:95.40px;top:406.43px;width:120.10px;height:1px;background:#747474"></div><div class="a" style="left:95.40px;top:420.25px;width:120.10px;height:1px;background:#747474"></div><div class="a" style="left:95.40px;top:434.07px;width:120.10px;height:1px;background:#747474"></div>
<div class="cell" style="left:96.40px;top:448.89px;width:39.70px;height:13.82px;color:#3a3a3a;background:#ddebf7;line-height:15.62px;"><span style="display:inline-block;--w:32.0px">都道府県</span></div>
<div class="cell" style="left:136.10px;top:448.89px;width:39.70px;height:13.82px;color:#3a3a3a;background:#ddebf7;line-height:15.62px;"><span style="display:inline-block;--w:24.0px">店舗名</span></div>
<div class="cell" style="left:175.80px;top:448.89px;width:39.70px;height:13.82px;color:#3a3a3a;background:#ddebf7;line-height:15.62px;"><span style="display:inline-block;--w:24.0px">担当者</span></div>
<div class="cell" style="left:215.50px;top:448.89px;width:45.00px;height:13.82px;color:#3a3a3a;background:#ddebf7;line-height:15.62px;"><span style="display:inline-block;--w:16.0px">合計</span></div>
<div class="cell" style="left:96.40px;top:462.71px;width:39.70px;height:13.82px;color:#3a3a3a;line-height:15.62px;"><span style="display:inline-block;--w:16.0px">東京</span></div>
<div class="cell" style="left:136.10px;top:462.71px;width:39.70px;height:13.82px;color:#3a3a3a;line-height:15.62px;"><span style="display:inline-block;--w:22.0px">店舗A</span></div>
<div class="cell" style="left:175.80px;top:462.71px;width:39.70px;height:13.82px;color:#3a3a3a;line-height:15.62px;"><span style="display:inline-block;--w:16.0px">田中</span></div>
<div class="cell num" style="left:215.50px;top:462.71px;width:45.00px;height:13.82px;color:#3a3a3a;line-height:15.62px;">62300</div>
<div class="a" style="left:135.10px;top:447.89px;width:1px;height:28.64px;background:#747474"></div><div class="a" style="left:174.80px;top:447.89px;width:1px;height:28.64px;background:#747474"></div><div class="a" style="left:214.50px;top:447.89px;width:1px;height:28.64px;background:#747474"></div><div class="a" style="left:259.50px;top:447.89px;width:1px;height:28.64px;background:#747474"></div><div class="a" style="left:95.40px;top:447.89px;width:165.10px;height:1px;background:#747474"></div><div class="a" style="left:95.40px;top:461.71px;width:165.10px;height:1px;background:#747474"></div><div class="a" style="left:95.40px;top:475.53px;width:165.10px;height:1px;background:#747474"></div>
<div class="a" style="left:214.00px;top:475.03px;width:47.00px;height:15.82px;border:1.5px solid #217346"></div>
<div class="a" style="left:258.50px;top:488.35px;width:3.5px;height:3.5px;background:#217346;border:0.5px solid #fff"></div>
<div class="a" style="left:932.2px;top:118px;width:11.8px;height:410.5px;background:#e6e6e6"></div>
<div class="a" style="left:933.3px;top:118.2px;width:9.1px;height:410px;background:#fff"></div>
<div class="a" style="left:933.3px;top:127.3px;width:9.1px;height:0.8px;background:#dcdcdc"></div>
<svg class="a" style="left:934px;top:120px" width="8" height="6"><path d="M1.2 4.5 L4 1.5 L6.8 4.5z" fill="#666"/></svg>
<div class="a" style="left:933.3px;top:505.7px;width:9.1px;height:13.9px;background:#dcdcdc"></div>
<svg class="a" style="left:934px;top:521px" width="8" height="6"><path d="M1.2 1.5 L4 4.5 L6.8 1.5z" fill="#666"/></svg>
<div class="a" style="left:931.7px;top:131px;width:1px;height:398px;background:#d0d0d0"></div>
<div class="a" style="left:80px;top:528.5px;width:864px;height:11.5px;background:#e6e6e6"></div>
<div class="a" style="left:80px;top:528.3px;width:852px;height:1px;background:#cfcfcf"></div>
<svg class="a" style="left:88px;top:531px" width="20" height="8"><path d="M4.5 1.5 L2.5 3.5 L4.5 5.5 M15 1.5 L17 3.5 L15 5.5" fill="none" stroke="#bdbdbd" stroke-width="0.7"/></svg>
<div class="a" style="left:121.6px;top:528.5px;width:37.5px;height:11.3px;background:#fff"></div>
<div class="a" style="left:121.6px;top:538.5px;width:37.5px;height:1px;background:#8fbca0"></div>
<div class="t" style="left:126.9px;top:530.5px;font-size:8px;color:#2f7c52">Sheet1</div>
<svg class="a" style="left:171px;top:529px" width="12" height="11"><circle cx="5.7" cy="5.5" r="4" fill="none" stroke="#777" stroke-width="0.7"/><path d="M5.7 3.5 v4 M3.7 5.5 h4" stroke="#777" stroke-width="0.7"/></svg>
<svg class="a" style="left:595px;top:530px" width="3" height="9"><circle cx="1.5" cy="1.5" r="0.5" fill="#888"/><circle cx="1.5" cy="4.5" r="0.5" fill="#888"/><circle cx="1.5" cy="7.5" r="0.5" fill="#888"/></svg>
<div class="a" style="left:603.6px;top:529.3px;width:328.4px;height:9.7px;background:#fff"></div>
<div class="a" style="left:612.6px;top:529.3px;width:0.8px;height:9.7px;background:#dcdcdc"></div>
<div class="a" style="left:907px;top:529.3px;width:16.75px;height:9.7px;background:#dcdcdc"></div>
<svg class="a" style="left:604px;top:530px" width="9" height="8"><path d="M5.5 1.5 L2.5 4 L5.5 6.5z" fill="#555"/></svg>
<svg class="a" style="left:924px;top:530px" width="9" height="8"><path d="M3 1.5 L6 4 L3 6.5z" fill="#555"/></svg>
<div class="a" style="left:80px;top:540px;width:864px;height:13px;background:#f3f3f3"></div>
<div class="t" style="left:84.7px;top:543.57px;font-size:7.2px;color:#222;--w:27px">準備完了</div>
<svg class="a" style="left:721px;top:543px" width="9" height="8"><rect x="0" y="0" width="7" height="5.5" fill="#555"/><circle cx="6.5" cy="6" r="2" fill="#555" stroke="#f3f3f3" stroke-width="0.6"/></svg>
<div class="t" style="left:731px;top:543.57px;font-size:7.2px;color:#222;--w:27.4px">表示設定</div>
<div class="a" style="left:769.4px;top:540.6px;width:22.4px;height:12.5px;background:#d6d6d6"></div>
<svg class="a" style="left:775px;top:542px" width="60" height="10"><g fill="none" stroke="#777" stroke-width="0.6"><rect x="1" y="1" width="8" height="7"/><path d="M1 3.5 h8 M1 6 h8 M3.7 1 v7 M6.3 1 v7"/><rect x="24" y="1" width="8" height="7"/><rect x="25.5" y="2.5" width="5" height="4"/><path d="M47.5 1 v7 h7.5 v-7 M47.5 4.5 h3 M52 4.5 h3"/></g></svg>
<div class="a" style="left:841.4px;top:546.5px;width:3.6px;height:0.8px;background:#888"></div>
<div class="a" style="left:848.25px;top:546.5px;width:57.2px;height:0.8px;background:#aaa"></div>
<div class="a" style="left:876.4px;top:543px;width:2.4px;height:7px;background:#555"></div>
<div class="t" style="left:908px;top:543px;font-size:7px;color:#777">+</div>
<div class="t" style="left:919.8px;top:543px;font-size:7.8px;color:#444;--w:20px">100%</div>
<div class="a" style="left:80px;top:552.8px;width:864px;height:23.2px;background:#1b2a3d"></div>
<div class="a" style="left:80px;top:552.8px;width:27.7px;height:23.2px;background:#1d3440"></div>
<svg class="a" style="left:89px;top:560px" width="10" height="11"><path d="M0.5 1.5 L4.4 1 V4.9 H0.5z M5 0.9 L9.5 0.3 V4.9 H5z M0.5 5.5 H4.4 V9.4 L0.5 8.9z M5 5.5 H9.5 V10.1 L5 9.5z" fill="#fff"/></svg>
<div class="a" style="left:107.7px;top:552.8px;width:197.3px;height:23.2px;background:#f2f2f2"></div>
<svg class="a" style="left:114px;top:559px" width="11" height="12"><circle cx="6.5" cy="4.5" r="3.3" fill="none" stroke="#333" stroke-width="0.9"/><path d="M4.2 6.8 L0.8 10.5" stroke="#333" stroke-width="1"/></svg>
<div class="t" style="left:129.7px;top:560.52px;font-size:8px;color:#333;--w:66.3px">ここに入力して検索</div>
<svg class="a" style="left:80px;top:552.8px" width="864" height="23.2"><circle cx="239.3" cy="11.7" r="3.5" fill="none" stroke="#fff" stroke-width="1.1"/><g fill="none" stroke="#ccc" stroke-width="0.8"><rect x="263" y="8.5" width="6" height="6"/><path d="M261.5 7 v9 M270.5 7 v9 M265 6 h2 M265 17 h2"/></g><rect x="289.7" y="7" width="13" height="10" fill="#f5c342"/><rect x="289.7" y="5.5" width="5" height="2" fill="#e0a820"/><rect x="293" y="11" width="6.5" height="4" fill="#2d8fd9"/><rect x="318.3" y="5.5" width="13" height="12" fill="#1e7fd9"/><path d="M318.3 17.5 L323 11 L327 15 L329 13 L331.3 17.5z" fill="#0d3d80"/><circle cx="328.5" cy="8.5" r="1.2" fill="#fff"/><path d="M347 8 h13 v10 h-13z" fill="#fff"/><path d="M350.5 8 v-2.5 h6 v2.5" fill="none" stroke="#fff" stroke-width="1"/><rect x="351" y="11" width="2.3" height="2.3" fill="#f25022"/><rect x="353.7" y="11" width="2.3" height="2.3" fill="#7fba00"/><rect x="351" y="13.7" width="2.3" height="2.3" fill="#00a4ef"/><rect x="353.7" y="13.7" width="2.3" height="2.3" fill="#ffb900"/><circle cx="382.3" cy="11.7" r="6" fill="#1f8fd6"/><circle cx="383.5" cy="12.5" r="2.8" fill="#1b2a3d"/><path d="M376.3 12 a6 6 0 0 0 11 3" fill="none" stroke="#52c96b" stroke-width="2"/><path d="M405 16 L409 5 L417.4 8 L413.5 18z" fill="#bfe0f5"/><path d="M406 15 L409.5 6" stroke="#7fb3d8" stroke-width="0.8"/><circle cx="439.2" cy="11.7" r="6.5" fill="#f7e600"/><path d="M464 6 L468 9 L472 6 L471 11 L474 14 L469 14 L467 18 L465 13 L462 11z" fill="#c7d7ef"/><path d="M468 11 L472 18 L473.5 17z" fill="#fff"/><rect x="489.8" y="7" width="14.6" height="10" fill="#1e88e5"/><path d="M489.8 7 L497.1 12.5 L504.4 7" fill="none" stroke="#fff" stroke-width="1"/><path d="M489.8 7 L497.1 2.5 L504.4 7z" fill="#1e88e5"/><rect x="519.6" y="5.5" width="13" height="12.5" fill="#26303a"/><path d="M522.5 9 L529 15 L530.5 13.5 L524 7.5z" fill="#5ed6c3"/><rect x="522" y="7" width="3" height="3" fill="#fff"/><rect x="541.9" y="0" width="26.1" height="23.2" fill="#35434f"/><rect x="550" y="5.5" width="12.9" height="12.5" fill="#1f9d55"/><rect x="547.7" y="7.5" width="7.5" height="8.5" fill="#107c41"/><text x="549.3" y="14.5" font-size="6.5" fill="#fff" font-family="Liberation Sans" font-weight="bold">x</text><path d="M575.8 6 h11 v11 h-11z" fill="#2bb3c0"/><path d="M586.8 9 L590 7 V16 L586.8 14z" fill="#2bb3c0"/><circle cx="581.3" cy="11.5" r="2.5" fill="#e53935" stroke="#fff" stroke-width="0.8"/><path d="M579 17 v3 M584 17 v3" stroke="#2bb3c0" stroke-width="1"/><path d="M628 14 L632 10 L636 14" fill="none" stroke="#ccc" stroke-width="0.9"/><rect x="428" y="22" width="23.600000000000023" height="1.2" fill="#9cc9ee"/><rect x="515" y="22" width="22" height="1.2" fill="#9cc9ee"/><rect x="541.9" y="22" width="26.100000000000023" height="1.2" fill="#9cc9ee"/><rect x="572" y="22" width="22.600000000000023" height="1.2" fill="#9cc9ee"/><path d="M645 9.5 h2.5 l3.5 -3 v10 l-3.5 -3 h-2.5z" fill="none" stroke="#ddd" stroke-width="0.8"/><text x="761" y="15" font-size="8" fill="#fff" font-family="Liberation Serif">A</text><g fill="none" stroke="#ddd" stroke-width="0.8"><rect x="662" y="7" width="8" height="6"/><path d="M664 15 h4"/><rect x="683" y="8" width="9" height="6"/><path d="M735 16 l7 -7 l1.5 1.5 l-7 7z"/></g><circle cx="705" cy="12" r="3" fill="#e53935"/><circle cx="703" cy="11" r="2.5" fill="#fff"/><circle cx="778.8" cy="10.9" r="4.2" fill="#1a73e8"/><circle cx="781.5" cy="14" r="1.6" fill="#f4b400"/><circle cx="782.5" cy="13" r="1" fill="#e53935"/><path d="M840.2 7 h9 v6.5 h-5 l-2 2 v-2 h-2z" fill="#fff"/><path d="M842 9 h5 M842 11 h5" stroke="#1b2a3d" stroke-width="0.6"/><rect x="861.5" y="0" width="0.8" height="23.2" fill="#56606b"/></svg>
<div class="t" style="left:883.7px;top:556.3px;font-size:7px;color:#fff">18:36</div>
<div class="t" style="left:873.5px;top:566.5px;font-size:7px;color:#fff">2021/06/10</div>
<div class="t" style="left:734.5px;top:556.5px;font-size:15px;color:#fff;letter-spacing:-0.4px;-webkit-text-stroke:1.2px #222;paint-order:stroke fill;--w:84.5px">©2021 saym</div>
<div class="a" style="left:276.3px;top:377.4px;width:308.7px;height:35.2px;background:#fff;border:4px solid #f00"></div>
<div class="t" style="left:406.2px;top:386.2px;font-size:20px;color:#e8000b;-webkit-text-stroke:0.35px #e8000b;--w:47.8px">Enter</div>
<svg class="a" style="left:395px;top:385px" width="72" height="22"><path d="M3.2 12.3 V2.8 H9.5 M68.3 9.2 V18.8 H62" fill="none" stroke="#e8000b" stroke-width="1.8"/></svg>
<div class="a" style="left:276.8px;top:412.6px;width:307.9px;height:109px;background:#fff;border:1px solid #b0b0b0;border-top:none;border-radius:0 0 4px 4px"></div>
<div class="key" style="left:284.20px;top:417.80px;width:16.40px;height:10.20px"></div><div class="kt" style="left:286.20px;top:420.00px;font-size:4.5px">ESC</div><div class="key" style="left:302.63px;top:417.80px;width:16.40px;height:10.20px"></div><div class="kt" style="left:304.63px;top:420.00px;font-size:4.5px">F1</div><div class="key" style="left:321.06px;top:417.80px;width:16.40px;height:10.20px"></div><div class="kt" style="left:323.06px;top:420.00px;font-size:4.5px">F2</div><div class="key" style="left:339.49px;top:417.80px;width:16.40px;height:10.20px"></div><div class="kt" style="left:341.49px;top:420.00px;font-size:4.5px">F3</div><div class="key" style="left:357.92px;top:417.80px;width:16.40px;height:10.20px"></div><div class="kt" style="left:359.92px;top:420.00px;font-size:4.5px">F4</div><div class="key" style="left:376.35px;top:417.80px;width:16.40px;height:10.20px"></div><div class="kt" style="left:378.35px;top:420.00px;font-size:4.5px">F5</div><div class="key" style="left:394.78px;top:417.80px;width:16.40px;height:10.20px"></div><div class="kt" style="left:396.78px;top:420.00px;font-size:4.5px">F6</div><div class="key" style="left:413.21px;top:417.80px;width:16.40px;height:10.20px"></div><div class="kt" style="left:415.21px;top:420.00px;font-size:4.5px">F7</div><div class="key" style="left:431.64px;top:417.80px;width:16.40px;height:10.20px"></div><div class="kt" style="left:433.64px;top:420.00px;font-size:4.5px">F8</div><div class="key" style="left:450.07px;top:417.80px;width:16.40px;height:10.20px"></div><div class="kt" style="left:452.07px;top:420.00px;font-size:4.5px">F9</div><div class="key" style="left:468.50px;top:417.80px;width:16.40px;height:10.20px"></div><div class="kt" style="left:470.50px;top:420.00px;font-size:4.5px">F10</div><div class="key" style="left:486.93px;top:417.80px;width:16.40px;height:10.20px"></div><div class="kt" style="left:488.93px;top:420.00px;font-size:4.5px">F11</div><div class="key" style="left:505.36px;top:417.80px;width:16.40px;height:10.20px"></div><div class="kt" style="left:507.36px;top:420.00px;font-size:4.5px">F12</div><div class="key" style="left:523.79px;top:417.80px;width:16.40px;height:10.20px"></div><div class="kt" style="left:525.79px;top:420.00px;font-size:4.5px">Pause</div><div class="key" style="left:542.22px;top:417.80px;width:16.40px;height:10.20px"></div><div class="kt" style="left:544.22px;top:420.00px;font-size:4.5px">Insert</div><div class="key" style="left:560.65px;top:417.80px;width:16.40px;height:10.20px"></div><div class="kt" style="left:562.65px;top:420.00px;font-size:4.5px">Delete</div><div class="key" style="left:284.20px;top:429.50px;width:17.80px;height:16.10px"></div><div class="kt" style="left:286.20px;top:431.70px;font-size:4.5px">半角/</div><div class="kt" style="left:286.20px;top:439.60px">全角</div><div class="key" style="left:304.00px;top:429.50px;width:17.60px;height:16.10px"></div><div class="kt" style="left:306.00px;top:431.70px;font-size:4.5px">!</div><div class="kt" style="left:306.00px;top:439.60px">1</div><div class="kt" style="left:314.00px;top:439.50px">ぬ</div><div class="key" style="left:323.60px;top:429.50px;width:17.60px;height:16.10px"></div><div class="kt" style="left:325.60px;top:431.70px;font-size:4.5px">"</div><div class="kt" style="left:325.60px;top:439.60px">2</div><div class="kt" style="left:333.60px;top:439.50px">ふ</div><div class="key" style="left:343.20px;top:429.50px;width:17.60px;height:16.10px"></div><div class="kt" style="left:345.20px;top:431.70px;font-size:4.5px">#</div><div class="kt" style="left:345.20px;top:439.60px">3</div><div class="kt" style="left:353.20px;top:439.50px">あ</div><div class="key" style="left:362.80px;top:429.50px;width:17.60px;height:16.10px"></div><div class="kt" style="left:364.80px;top:431.70px;font-size:4.5px">$</div><div class="kt" style="left:364.80px;top:439.60px">4</div><div class="kt" style="left:372.80px;top:439.50px">う</div><div class="key" style="left:382.40px;top:429.50px;width:17.60px;height:16.10px"></div><div class="kt" style="left:384.40px;top:431.70px;font-size:4.5px">%</div><div class="kt" style="left:384.40px;top:439.60px">5</div><div class="kt" style="left:392.40px;top:439.50px">え</div><div class="key" style="left:402.00px;top:429.50px;width:17.60px;height:16.10px"></div><div class="kt" style="left:404.00px;top:431.70px;font-size:4.5px">&amp;</div><div class="kt" style="left:404.00px;top:439.60px">6</div><div class="kt" style="left:412.00px;top:439.50px">お</div><div class="key" style="left:421.60px;top:429.50px;width:17.60px;height:16.10px"></div><div class="kt" style="left:423.60px;top:431.70px;font-size:4.5px">'</div><div class="kt" style="left:423.60px;top:439.60px">7</div><div class="kt" style="left:431.60px;top:439.50px">や</div><div class="key" style="left:441.20px;top:429.50px;width:17.60px;height:16.10px"></div><div class="kt" style="left:443.20px;top:431.70px;font-size:4.5px">(</div><div class="kt" style="left:443.20px;top:439.60px">8</div><div class="kt" style="left:451.20px;top:439.50px">ゆ</div><div class="key" style="left:460.80px;top:429.50px;width:17.60px;height:16.10px"></div><div class="kt" style="left:462.80px;top:431.70px;font-size:4.5px">)</div><div class="kt" style="left:462.80px;top:439.60px">9</div><div class="kt" style="left:470.80px;top:439.50px">よ</div><div class="key" style="left:480.40px;top:429.50px;width:17.60px;height:16.10px"></div><div class="kt" style="left:482.40px;top:439.60px">0</div><div class="kt" style="left:490.40px;top:439.50px">わ</div><div class="key" style="left:500.00px;top:429.50px;width:17.60px;height:16.10px"></div><div class="kt" style="left:502.00px;top:431.70px;font-size:4.5px">=</div><div class="kt" style="left:502.00px;top:439.60px">-</div><div class="kt" style="left:510.00px;top:439.50px">ほ</div><div class="key" style="left:519.60px;top:429.50px;width:17.60px;height:16.10px"></div><div class="kt" style="left:521.60px;top:431.70px;font-size:4.5px">~</div><div class="kt" style="left:521.60px;top:439.60px">^</div><div class="kt" style="left:529.60px;top:439.50px">へ</div><div class="key" style="left:539.20px;top:429.50px;width:17.60px;height:16.10px"></div><div class="kt" style="left:541.20px;top:431.70px;font-size:4.5px">|</div><div class="kt" style="left:541.20px;top:439.60px">¥</div><div class="kt" style="left:549.20px;top:439.50px">ー</div><div class="key" style="left:559.00px;top:429.50px;width:18.00px;height:16.10px"></div><div class="kt" style="left:561.00px;top:431.70px;font-size:4.5px">Back</div><div class="kt" style="left:561.00px;top:439.60px">space</div><div class="key" style="left:284.20px;top:447.20px;width:32.00px;height:15.60px"></div><div class="kt" style="left:286.20px;top:449.40px;font-size:4.5px">Tab</div><svg class="a" style="left:286px;top:455px" width="20" height="7"><path d="M1 1 V4 M2 2.5 H10 M18 3.5 V6.5 M9 5 H17" fill="none" stroke="#222" stroke-width="0.6"/><path d="M1.5 2.5 L4 1.3 V3.7z M17.5 5 L15 3.8 V6.2z" fill="#222"/></svg><div class="key" style="left:318.50px;top:447.20px;width:17.60px;height:15.60px"></div><div class="kt" style="left:320.50px;top:449.40px;font-size:4.5px">Q</div><div class="kt" style="left:328.50px;top:456.50px">た</div><div class="key" style="left:338.10px;top:447.20px;width:17.60px;height:15.60px"></div><div class="kt" style="left:340.10px;top:449.40px;font-size:4.5px">W</div><div class="kt" style="left:348.10px;top:456.50px">て</div><div class="key" style="left:357.70px;top:447.20px;width:17.60px;height:15.60px"></div><div class="kt" style="left:359.70px;top:449.40px;font-size:4.5px">E</div><div class="kt" style="left:367.70px;top:456.50px">い</div><div class="key" style="left:377.30px;top:447.20px;width:17.60px;height:15.60px"></div><div class="kt" style="left:379.30px;top:449.40px;font-size:4.5px">R</div><div class="kt" style="left:387.30px;top:456.50px">す</div><div class="key" style="left:396.90px;top:447.20px;width:17.60px;height:15.60px"></div><div class="kt" style="left:398.90px;top:449.40px;font-size:4.5px">T</div><div class="kt" style="left:406.90px;top:456.50px">か</div><div class="key" style="left:416.50px;top:447.20px;width:17.60px;height:15.60px"></div><div class="kt" style="left:418.50px;top:449.40px;font-size:4.5px">Y</div><div class="kt" style="left:426.50px;top:456.50px">ん</div><div class="key" style="left:436.10px;top:447.20px;width:17.60px;height:15.60px"></div><div class="kt" style="left:438.10px;top:449.40px;font-size:4.5px">U</div><div class="kt" style="left:446.10px;top:456.50px">な</div><div class="key" style="left:455.70px;top:447.20px;width:17.60px;height:15.60px"></div><div class="kt" style="left:457.70px;top:449.40px;font-size:4.5px">I</div><div class="kt" style="left:465.70px;top:456.50px">に</div><div class="key" style="left:475.30px;top:447.20px;width:17.60px;height:15.60px"></div><div class="kt" style="left:477.30px;top:449.40px;font-size:4.5px">O</div><div class="kt" style="left:485.30px;top:456.50px">ら</div><div class="key" style="left:494.90px;top:447.20px;width:17.60px;height:15.60px"></div><div class="kt" style="left:496.90px;top:449.40px;font-size:4.5px">P</div><div class="kt" style="left:504.90px;top:456.50px">せ</div><div class="key" style="left:514.50px;top:447.20px;width:17.60px;height:15.60px"></div><div class="kt" style="left:516.50px;top:449.40px;font-size:4.5px">`</div><div class="kt" style="left:524.50px;top:456.50px">゛</div><div class="key" style="left:534.10px;top:447.20px;width:17.60px;height:15.60px"></div><div class="kt" style="left:536.10px;top:449.40px;font-size:4.5px">{</div><div class="kt" style="left:544.10px;top:456.50px">「</div><div class="key" style="left:284.20px;top:464.70px;width:35.40px;height:15.60px"></div><div class="kt" style="left:286.5px;top:467.5px;font-size:5.5px;font-weight:normal">Caps Lock<br><span style="font-size:4px">英数</span></div><div class="key" style="left:321.70px;top:464.70px;width:17.60px;height:15.60px"></div><div class="kt" style="left:323.70px;top:466.90px;font-size:4.5px">A</div><div class="kt" style="left:331.70px;top:474.00px">ち</div><div class="key" style="left:341.30px;top:464.70px;width:17.60px;height:15.60px"></div><div class="kt" style="left:343.30px;top:466.90px;font-size:4.5px">S</div><div class="kt" style="left:351.30px;top:474.00px">と</div><div class="key" style="left:360.90px;top:464.70px;width:17.60px;height:15.60px"></div><div class="kt" style="left:362.90px;top:466.90px;font-size:4.5px">D</div><div class="kt" style="left:370.90px;top:474.00px">し</div><div class="key" style="left:380.50px;top:464.70px;width:17.60px;height:15.60px"></div><div class="kt" style="left:382.50px;top:466.90px;font-size:4.5px">F</div><div class="kt" style="left:390.50px;top:474.00px">は</div><div class="key" style="left:400.10px;top:464.70px;width:17.60px;height:15.60px"></div><div class="kt" style="left:402.10px;top:466.90px;font-size:4.5px">G</div><div class="kt" style="left:410.10px;top:474.00px">き</div><div class="key" style="left:419.70px;top:464.70px;width:17.60px;height:15.60px"></div><div class="kt" style="left:421.70px;top:466.90px;font-size:4.5px">H</div><div class="kt" style="left:429.70px;top:474.00px">く</div><div class="key" style="left:439.30px;top:464.70px;width:17.60px;height:15.60px"></div><div class="kt" style="left:441.30px;top:466.90px;font-size:4.5px">J</div><div class="kt" style="left:449.30px;top:474.00px">ま</div><div class="key" style="left:458.90px;top:464.70px;width:17.60px;height:15.60px"></div><div class="kt" style="left:460.90px;top:466.90px;font-size:4.5px">K</div><div class="kt" style="left:468.90px;top:474.00px">の</div><div class="key" style="left:478.50px;top:464.70px;width:17.60px;height:15.60px"></div><div class="kt" style="left:480.50px;top:466.90px;font-size:4.5px">L</div><div class="kt" style="left:488.50px;top:474.00px">り</div><div class="key" style="left:498.10px;top:464.70px;width:17.60px;height:15.60px"></div><div class="kt" style="left:500.10px;top:466.90px;font-size:4.5px">+</div><div class="kt" style="left:508.10px;top:474.00px">れ</div><div class="key" style="left:517.70px;top:464.70px;width:17.60px;height:15.60px"></div><div class="kt" style="left:519.70px;top:466.90px;font-size:4.5px">*</div><div class="kt" style="left:527.70px;top:474.00px">け</div><div class="key" style="left:537.30px;top:464.70px;width:17.60px;height:15.60px"></div><div class="kt" style="left:539.30px;top:466.90px;font-size:4.5px">}</div><div class="kt" style="left:547.30px;top:474.00px">む</div><svg class="a" style="left:552px;top:446px" width="27" height="36"><path d="M1.5 1.5 H24.5 V33.5 H5.5 V17 H1.5z" fill="#fff" stroke="#8a8a8a" stroke-width="1" stroke-linejoin="round"/></svg><div class="kt" style="left:558px;top:451px;font-size:4.8px">Enter</div><svg class="a" style="left:557px;top:456px" width="16" height="6"><path d="M2 3.5 H12 V1" fill="none" stroke="#333" stroke-width="0.7"/><path d="M1 3.5 L4 2 V5z" fill="#333"/></svg><div class="key" style="left:284.00px;top:482.20px;width:40.30px;height:15.90px"></div><div class="kt" style="left:287px;top:488px;font-size:5px">◆ Shift</div><div class="key" style="left:326.80px;top:482.20px;width:17.20px;height:15.90px"></div><div class="kt" style="left:328.80px;top:484.40px;font-size:4.5px">Z</div><div class="kt" style="left:336.80px;top:492.00px">つ</div><div class="key" style="left:346.40px;top:482.20px;width:17.20px;height:15.90px"></div><div class="kt" style="left:348.40px;top:484.40px;font-size:4.5px">X</div><div class="kt" style="left:356.40px;top:492.00px">さ</div><div class="key" style="left:366.00px;top:482.20px;width:17.20px;height:15.90px"></div><div class="kt" style="left:368.00px;top:484.40px;font-size:4.5px">C</div><div class="kt" style="left:376.00px;top:492.00px">そ</div><div class="key" style="left:385.60px;top:482.20px;width:17.20px;height:15.90px"></div><div class="kt" style="left:387.60px;top:484.40px;font-size:4.5px">V</div><div class="kt" style="left:395.60px;top:492.00px">ひ</div><div class="key" style="left:405.20px;top:482.20px;width:17.20px;height:15.90px"></div><div class="kt" style="left:407.20px;top:484.40px;font-size:4.5px">B</div><div class="kt" style="left:415.20px;top:492.00px">こ</div><div class="key" style="left:424.80px;top:482.20px;width:17.20px;height:15.90px"></div><div class="kt" style="left:426.80px;top:484.40px;font-size:4.5px">N</div><div class="kt" style="left:434.80px;top:492.00px">み</div><div class="key" style="left:444.40px;top:482.20px;width:17.20px;height:15.90px"></div><div class="kt" style="left:446.40px;top:484.40px;font-size:4.5px">M</div><div class="kt" style="left:454.40px;top:492.00px">も</div><div class="key" style="left:464.00px;top:482.20px;width:17.20px;height:15.90px"></div><div class="kt" style="left:466.00px;top:484.40px;font-size:4.5px">&lt;</div><div class="kt" style="left:474.00px;top:492.00px">ね</div><div class="key" style="left:483.60px;top:482.20px;width:17.20px;height:15.90px"></div><div class="kt" style="left:485.60px;top:484.40px;font-size:4.5px">&gt;</div><div class="kt" style="left:493.60px;top:492.00px">る</div><div class="key" style="left:503.20px;top:482.20px;width:17.20px;height:15.90px"></div><div class="kt" style="left:505.20px;top:484.40px;font-size:4.5px">?</div><div class="kt" style="left:513.20px;top:492.00px">め</div><div class="key" style="left:522.80px;top:482.20px;width:17.20px;height:15.90px"></div><div class="kt" style="left:524.80px;top:484.40px;font-size:4.5px">_</div><div class="kt" style="left:532.80px;top:492.00px">ろ</div><div class="key" style="left:542.50px;top:482.20px;width:14.80px;height:15.90px"></div><svg class="a" style="left:542.5px;top:482.2px" width="15" height="16"><path d="M7.4 3 V8" stroke="#222" stroke-width="0.8"/><path d="M7.4 2 L5.9 4.5 H8.9z" fill="#222"/><text x="7.4" y="13.5" font-size="4.2" text-anchor="middle" fill="#333" font-family="Liberation Sans">PgUp</text></svg><div class="key" style="left:559.40px;top:482.20px;width:17.60px;height:15.90px"></div><svg class="a" style="left:559.4px;top:482.2px" width="18" height="16"><text x="9" y="6" font-size="4.5" text-anchor="middle" fill="#333" font-family="Liberation Sans">Shift</text><path d="M9 8 L12 10.5 L9 13 L6 10.5z" fill="#111"/></svg><div class="key" style="left:284.00px;top:499.7px;width:17.30px;height:16.3px"></div><div class="kt" style="left:284.00px;width:17.30px;text-align:center;top:505px;font-size:5px;line-height:6px">Fn</div><div class="key" style="left:303.70px;top:499.7px;width:17.60px;height:16.3px"></div><div class="kt" style="left:303.70px;width:17.60px;text-align:center;top:505px;font-size:5px;line-height:6px">Ctrl</div><div class="key" style="left:323.70px;top:499.7px;width:17.50px;height:16.3px"></div><div class="key" style="left:343.50px;top:499.7px;width:17.20px;height:16.3px"></div><div class="kt" style="left:343.50px;width:17.20px;text-align:center;top:505px;font-size:5px;line-height:6px">Alt</div><div class="key" style="left:362.75px;top:499.7px;width:15.65px;height:16.3px"></div><div class="kt" style="left:362.75px;width:15.65px;text-align:center;top:505px;font-size:5px;line-height:6px">無変換</div><div class="key" style="left:380.25px;top:499.7px;width:66.65px;height:16.3px"></div><div class="key" style="left:449.50px;top:499.7px;width:14.90px;height:16.3px"></div><div class="kt" style="left:449.50px;width:14.90px;text-align:center;top:505px;font-size:5px;line-height:6px">変換</div><div class="key" style="left:466.70px;top:499.7px;width:17.30px;height:16.3px"></div><div class="kt" style="left:466.70px;width:17.30px;text-align:center;top:505px;font-size:5px;line-height:6px">かな</div><div class="key" style="left:486.25px;top:499.7px;width:15.65px;height:16.3px"></div><div class="key" style="left:503.75px;top:499.7px;width:16.85px;height:16.3px"></div><div class="kt" style="left:503.75px;width:16.85px;text-align:center;top:505px;font-size:5px;line-height:6px">Ctrl</div><div class="key" style="left:523.00px;top:499.7px;width:17.20px;height:16.3px"></div><div class="key" style="left:542.50px;top:499.7px;width:14.80px;height:16.3px"></div><div class="key" style="left:559.40px;top:499.7px;width:17.50px;height:16.3px"></div><svg class="a" style="left:327px;top:503px" width="10" height="9"><path d="M0.5 1 L4.3 0.5 V4 H0.5z M5 0.4 L9.5 0 V4 H5z M0.5 4.7 H4.3 V8.2 L0.5 7.8z M5 4.7 H9.5 V8.8 L5 8.3z" fill="#222"/></svg><svg class="a" style="left:523px;top:499.7px" width="54" height="17"><g stroke="#222" stroke-width="0.8" fill="#222"><path d="M4 4.5 H13"/><path d="M3 4.5 L6 3 V6z"/><path d="M27.3 2 V7"/><path d="M27.3 8 L25.8 5.5 H28.8z"/><path d="M41 4.5 H50"/><path d="M51 4.5 L48 3 V6z"/></g><text x="8.6" y="13.5" font-size="4.2" text-anchor="middle" fill="#333" font-family="Liberation Sans">Home</text><text x="27.3" y="13.5" font-size="4.2" text-anchor="middle" fill="#333" font-family="Liberation Sans">PgDn</text><text x="45.2" y="13.5" font-size="4.2" text-anchor="middle" fill="#333" font-family="Liberation Sans">End</text></svg><div class="a" style="left:490.5px;top:504px;width:7px;height:7px;border:0.8px solid #555;background:#eee"></div>
<div class="a" style="left:550.3px;top:442px;width:30.5px;height:44.6px;border:3.4px solid #f00;border-radius:4px"></div>
<script>(function(){var e=document.querySelectorAll("[style*='--w']");for(var i=0;i<e.length;i++){var d=e[i];var w=parseFloat(d.style.getPropertyValue("--w"));var n=d.offsetWidth;if(n>0&&w>0){d.style.transformOrigin="0 0";d.style.transform="scaleX("+(w/n)+")";}}})();</script>
</body></html>
